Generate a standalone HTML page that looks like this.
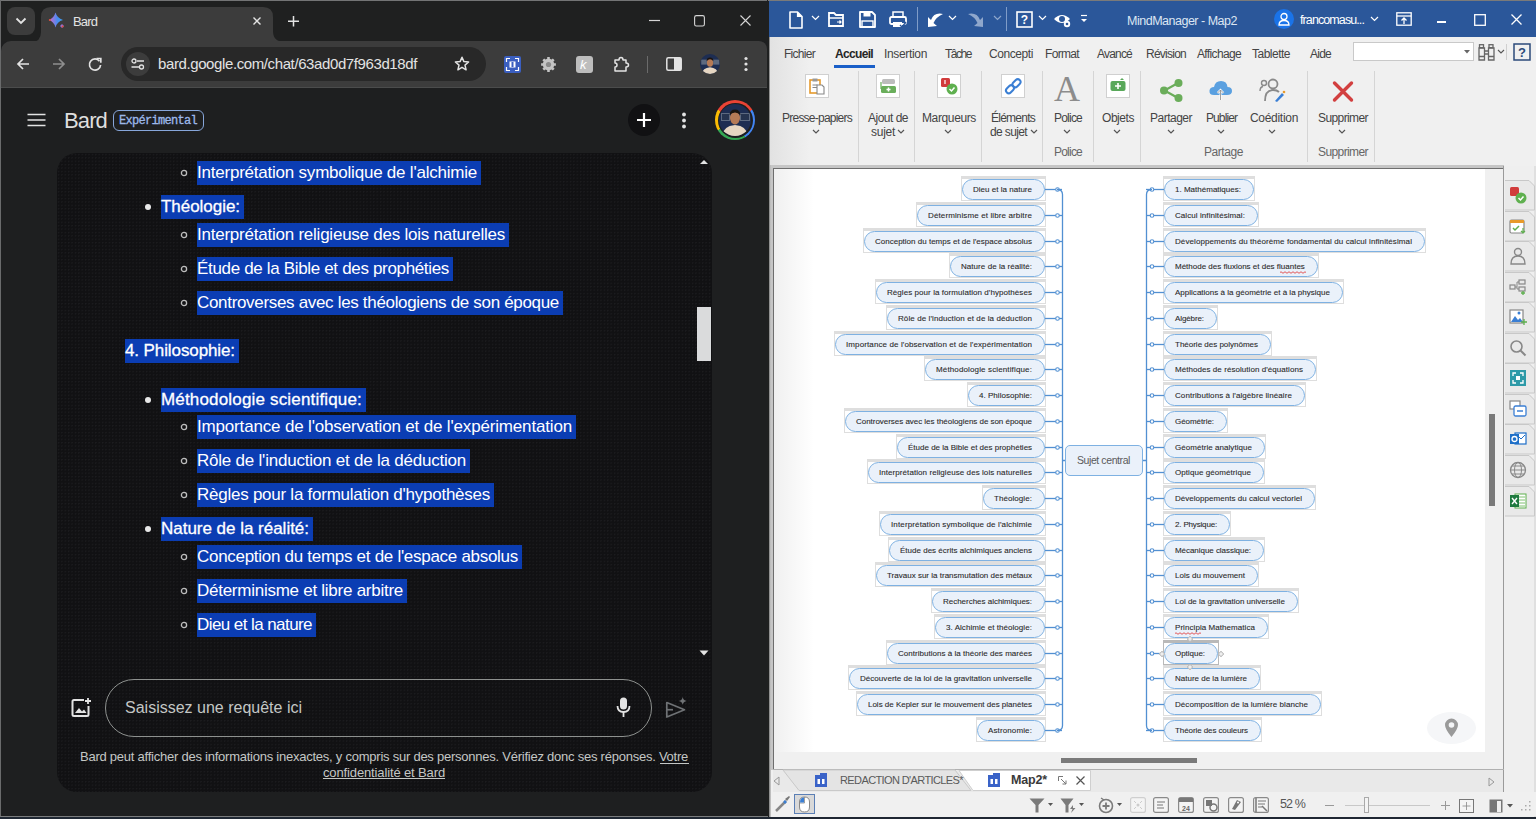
<!DOCTYPE html>
<html><head><meta charset="utf-8"><style>
html,body{margin:0;padding:0;width:1536px;height:819px;overflow:hidden;background:#1e1f20;font-family:"Liberation Sans", sans-serif;}
.t{position:absolute;white-space:pre;}
svg{overflow:visible}
</style></head><body>
<div style="position:absolute;left:0px;top:0px;width:769px;height:41px;background:#1f2020;"></div>
<div style="position:absolute;left:0px;top:88px;width:767px;height:728px;background:#1e1f20;"></div>
<div style="position:absolute;left:0px;top:0px;width:769px;height:1px;background:#737475;"></div>
<div style="position:absolute;left:0px;top:0px;width:1px;height:819px;background:#6a6b6c;"></div>
<div style="position:absolute;left:7px;top:7px;width:28px;height:28px;background:#3c3c3c;border-radius:8px;"></div>
<svg style="position:absolute;left:15px;top:17px" width="12" height="8" viewBox="0 0 12 8"><path d="M1.5 1.5 L6 6 L10.5 1.5" fill="none" stroke="#e3e3e3" stroke-width="1.8"/></svg>
<svg style="position:absolute;left:0;top:7px" width="290" height="35" viewBox="0 0 290 35"><path d="M31 35 Q41 35 41 25 L41 10 Q41 0 51 0 L263 0 Q273 0 273 10 L273 24 Q273 35 285 35 Z" fill="#3c3c3c"/></svg>
<div style="position:absolute;left:1px;top:41px;width:766px;height:46px;background:#3c3c3c;border-radius:10px 8px 0 0;"></div>
<div style="position:absolute;left:1px;top:87px;width:766px;height:1px;background:#4b4c4c;"></div>
<svg style="position:absolute;left:48px;top:11px" width="20" height="20" viewBox="0 0 20 20"><defs><linearGradient id="bg1" x1="0" y1="0" x2="1" y2="0"><stop offset="0.2" stop-color="#a873d6"/><stop offset="0.6" stop-color="#4a8cf0"/><stop offset="1" stop-color="#3ba0f0"/></linearGradient></defs><path d="M7.5 1.5 Q9 7 15 9 Q9 10.5 7.5 16.5 Q6 10.5 0.8 9 Q6 7 7.5 1.5Z" fill="url(#bg1)"/><path d="M14 13 L16 15 L14 17 L12 15Z" fill="#9a70d8"/><circle cx="14.6" cy="15.6" r="1" fill="#e0503a"/><circle cx="1.8" cy="9" r="1" fill="#e0503a"/></svg>
<div class="t " style="left:73px;top:14px;font-size:13px;line-height:16px;color:#e3e3e3;letter-spacing:-0.867px;">Bard</div>
<svg style="position:absolute;left:252px;top:16px" width="10" height="10" viewBox="0 0 10 10"><path d="M1.5 1.5 L8.5 8.5 M8.5 1.5 L1.5 8.5" stroke="#e3e3e3" stroke-width="1.4"/></svg>
<svg style="position:absolute;left:288px;top:16px" width="11" height="11" viewBox="0 0 11 11"><path d="M5.5 0 V10.5 M0 5.25 H11" stroke="#e3e3e3" stroke-width="1.5"/></svg>
<svg style="position:absolute;left:649px;top:20px" width="11" height="2" viewBox="0 0 11 2"><path d="M0 0.5 H11" stroke="#d6d6d6" stroke-width="1.2"/></svg>
<svg style="position:absolute;left:694px;top:15px" width="11" height="11" viewBox="0 0 11 11"><rect x="0.6" y="0.6" width="9.8" height="10.4" rx="1.8" fill="none" stroke="#d6d6d6" stroke-width="1.1"/></svg>
<svg style="position:absolute;left:739.5px;top:15px" width="11" height="11" viewBox="0 0 11 11"><path d="M0.5 0.5 L10.5 10.5 M10.5 0.5 L0.5 10.5" stroke="#d6d6d6" stroke-width="1.1"/></svg>
<svg style="position:absolute;left:16px;top:57px" width="14" height="14" viewBox="0 0 14 14"><path d="M13 7 H2 M7 2 L2 7 L7 12" fill="none" stroke="#e3e3e3" stroke-width="1.7"/></svg>
<svg style="position:absolute;left:52px;top:57px" width="14" height="14" viewBox="0 0 14 14"><path d="M1 7 H12 M7 2 L12 7 L7 12" fill="none" stroke="#8e8e8e" stroke-width="1.7"/></svg>
<svg style="position:absolute;left:88px;top:57px" width="14" height="14" viewBox="0 0 14 14"><path d="M11.5 4.2 A5.6 5.6 0 1 0 12.6 8" fill="none" stroke="#e3e3e3" stroke-width="1.7"/><path d="M8.5 1.5 H12.8 V5.8" fill="none" stroke="#e3e3e3" stroke-width="1.7"/></svg>
<div style="position:absolute;left:121px;top:47px;width:365px;height:34px;background:#282828;border-radius:17px;"></div>
<div style="position:absolute;left:126px;top:52px;width:24px;height:24px;background:#3c3c3c;border-radius:12px;"></div>
<svg style="position:absolute;left:131px;top:58px" width="14" height="12" viewBox="0 0 14 12"><circle cx="3" cy="3" r="2" fill="none" stroke="#e3e3e3" stroke-width="1.3"/><path d="M6 3 H13" stroke="#e3e3e3" stroke-width="1.5"/><circle cx="10.5" cy="9" r="2" fill="none" stroke="#e3e3e3" stroke-width="1.3"/><path d="M0.5 9 H8" stroke="#e3e3e3" stroke-width="1.5"/></svg>
<div class="t " style="left:158px;top:55px;font-size:15px;line-height:18px;color:#e3e3e3;letter-spacing:-0.394px;">bard.google.com/chat/63ad0d7f963d18df</div>
<svg style="position:absolute;left:454px;top:56px" width="16" height="16" viewBox="0 0 16 16"><path d="M8 1.2 L9.9 5.6 L14.6 6 L11 9.1 L12.1 13.8 L8 11.3 L3.9 13.8 L5 9.1 L1.4 6 L6.1 5.6 Z" fill="none" stroke="#e3e3e3" stroke-width="1.5" stroke-linejoin="round"/></svg>
<div style="position:absolute;left:504px;top:56px;width:17px;height:17px;background:#3b5fc0;border-radius:2px;"></div>
<svg style="position:absolute;left:504px;top:56px" width="17" height="17" viewBox="0 0 17 17"><path d="M2.5 6 V2.5 H6 M11 2.5 H14.5 V6 M14.5 11 V14.5 H11 M6 14.5 H2.5 V11" fill="none" stroke="#fff" stroke-width="1.2"/><rect x="5.5" y="5.5" width="6" height="6" fill="#fff"/><rect x="7.5" y="6" width="2" height="5" fill="#3b5fc0"/></svg>
<svg style="position:absolute;left:540px;top:56px" width="17" height="17" viewBox="0 0 17 17"><path d="M15.89,7.23 L15.89,9.77 L14.16,9.78 L13.41,11.59 L14.62,12.83 L12.83,14.62 L11.59,13.41 L9.78,14.16 L9.77,15.89 L7.23,15.89 L7.22,14.16 L5.41,13.41 L4.17,14.62 L2.38,12.83 L3.59,11.59 L2.84,9.78 L1.11,9.77 L1.11,7.23 L2.84,7.22 L3.59,5.41 L2.38,4.17 L4.17,2.38 L5.41,3.59 L7.22,2.84 L7.23,1.11 L9.77,1.11 L9.78,2.84 L11.59,3.59 L12.83,2.38 L14.62,4.17 L13.41,5.41 L14.16,7.22Z" fill="#c4c4c4"/><circle cx="8.5" cy="8.5" r="2.6" fill="#8a8a8a"/></svg>
<div style="position:absolute;left:576px;top:56px;width:17px;height:17px;background:#bdbdbd;border-radius:3px;"></div>
<div class="t " style="left:580px;top:56px;font-size:13px;line-height:17px;color:#ffffff;font-style:italic;">k</div>
<svg style="position:absolute;left:613px;top:56px" width="18" height="17" viewBox="0 0 18 17"><path d="M2 4 H6 Q6 1.5 8 1.5 Q10 1.5 10 4 H13 V7 Q15.5 7 15.5 9 Q15.5 11 13 11 V15 H2 V11 Q4 11 4 9 Q4 7 2 7 Z" fill="none" stroke="#e3e3e3" stroke-width="1.5" stroke-linejoin="round"/></svg>
<div style="position:absolute;left:647px;top:56px;width:1px;height:17px;background:#6b6b6b;"></div>
<svg style="position:absolute;left:666px;top:57px" width="16" height="14" viewBox="0 0 16 14"><rect x="0.8" y="0.8" width="14.4" height="12.4" rx="1.5" fill="none" stroke="#e3e3e3" stroke-width="1.5"/><rect x="8" y="0.8" width="7.2" height="12.4" fill="#e3e3e3"/></svg>
<svg style="position:absolute;left:700px;top:54px" width="20" height="20" viewBox="0 0 32 32"><defs><clipPath id="av2"><circle cx="16" cy="16" r="16"/></clipPath></defs><g clip-path="url(#av2)"><rect width="32" height="32" fill="#1d2d52"/><rect x="2" y="9" width="9" height="8" fill="#5d6a80"/><rect x="21" y="9" width="10" height="8" fill="#5d6a80"/><path d="M3 32 Q4 22 16 21 Q28 22 29 32Z" fill="#e6d6c2"/><ellipse cx="16" cy="14" rx="5" ry="6.5" fill="#b57a56"/><path d="M10.5 11 Q11 5.5 16 5.5 Q21 5.5 21.5 11 Q19 8.5 16 8.5 Q13 8.5 10.5 11Z" fill="#1a1410"/></g></svg>
<svg style="position:absolute;left:743px;top:56px" width="6" height="16" viewBox="0 0 6 16"><circle cx="3" cy="2.5" r="1.6" fill="#e3e3e3"/><circle cx="3" cy="8" r="1.6" fill="#e3e3e3"/><circle cx="3" cy="13.5" r="1.6" fill="#e3e3e3"/></svg>
<div style="position:absolute;left:767px;top:0px;width:2px;height:817px;background:#1f2020;"></div>
<svg style="position:absolute;left:27px;top:113px" width="19" height="14" viewBox="0 0 19 14"><path d="M0.5 1.5 H18.5 M0.5 7 H18.5 M0.5 12.5 H18.5" stroke="#e3e3e3" stroke-width="1.7"/></svg>
<div class="t " style="left:64px;top:107px;font-size:22px;line-height:28px;color:#dedede;letter-spacing:-0.871px;">Bard</div>
<div style="position:absolute;left:113px;top:110px;width:89px;height:19px;border:1px solid #87a6da;border-radius:6px;"></div>
<div class="t" style="left:113px;top:112px;width:90px;text-align:center;font-family:'Liberation Mono',monospace;font-size:12px;line-height:18px;color:#9cb8ea;letter-spacing:-0.7px;-webkit-text-stroke:0.3px #9cb8ea">Expérimental</div>
<div style="position:absolute;left:628px;top:104px;width:32px;height:32px;background:#111113;border-radius:50%;"></div>
<svg style="position:absolute;left:636px;top:112px" width="16" height="16" viewBox="0 0 16 16"><path d="M8 1 V15 M1 8 H15" stroke="#fff" stroke-width="2.2"/></svg>
<svg style="position:absolute;left:681px;top:112px" width="6" height="17" viewBox="0 0 6 17"><circle cx="3" cy="2.5" r="1.9" fill="#e3e3e3"/><circle cx="3" cy="8.5" r="1.9" fill="#e3e3e3"/><circle cx="3" cy="14.5" r="1.9" fill="#e3e3e3"/></svg>
<div style="position:absolute;left:715px;top:100px;width:40px;height:40px;border-radius:50%;background:conic-gradient(from -60deg, #ea4335 0 120deg, #4285f4 120deg 210deg, #34a853 210deg 300deg, #fbbc04 300deg 360deg);"></div>
<div style="position:absolute;left:717.5px;top:102.5px;width:35px;height:35px;background:#1e1f20;border-radius:50%;"></div>
<svg style="position:absolute;left:719px;top:104px" width="32" height="32" viewBox="0 0 32 32"><defs><clipPath id="av"><circle cx="16" cy="16" r="16"/></clipPath></defs><g clip-path="url(#av)"><rect width="32" height="32" fill="#1d2d52"/><rect x="2" y="9" width="9" height="8" fill="#5d6a80"/><rect x="21" y="9" width="10" height="8" fill="#5d6a80"/><rect x="3" y="10" width="7" height="6" fill="#26344f"/><rect x="22" y="10" width="8" height="6" fill="#26344f"/><path d="M3 32 Q4 22 16 21 Q28 22 29 32Z" fill="#e6d6c2"/><ellipse cx="16" cy="14" rx="5" ry="6.5" fill="#b57a56"/><path d="M10.5 11 Q11 5.5 16 5.5 Q21 5.5 21.5 11 Q19 8.5 16 8.5 Q13 8.5 10.5 11Z" fill="#1a1410"/></g></svg>
<div style="position:absolute;left:57px;top:153px;width:655px;height:639px;background-color:#111113;background-image:radial-gradient(circle at 1.5px 1.5px, #1c1c1f 0.6px, transparent 0.9px);background-size:3.4px 3.4px;border-radius:20px;"></div>
<div style="position:absolute;left:697px;top:307px;width:14px;height:54px;background:#dadbdc;"></div>
<svg style="position:absolute;left:699px;top:159px" width="10" height="6" viewBox="0 0 10 6"><path d="M1 5 L5 1 L9 5Z" fill="#e3e3e3"/></svg>
<svg style="position:absolute;left:699px;top:650px" width="10" height="6" viewBox="0 0 10 6"><path d="M0.5 0.5 L5 5.5 L9.5 0.5Z" fill="#e3e3e3"/></svg>
<div style="position:absolute;left:197px;top:161px;width:284px;height:24px;background:#0b3db3;"></div>
<div class="t " style="left:197px;top:161px;font-size:17px;line-height:24px;color:#ffffff;letter-spacing:-0.221px;">Interprétation symbolique de l'alchimie</div>
<svg style="position:absolute;left:180px;top:169px" width="8" height="8" viewBox="0 0 8 8"><circle cx="4" cy="4" r="2.6" fill="none" stroke="#bdbdbd" stroke-width="1.3"/></svg>
<div style="position:absolute;left:161px;top:195px;width:83px;height:24px;background:#0b3db3;"></div>
<div class="t " style="left:161px;top:195px;font-size:17px;line-height:24px;color:#ffffff;-webkit-text-stroke:0.3px currentColor;letter-spacing:-0.039px;">Théologie:</div>
<svg style="position:absolute;left:144px;top:203px" width="8" height="8" viewBox="0 0 8 8"><circle cx="4" cy="4" r="3" fill="#e8e8e8"/></svg>
<div style="position:absolute;left:197px;top:223px;width:312px;height:24px;background:#0b3db3;"></div>
<div class="t " style="left:197px;top:223px;font-size:17px;line-height:24px;color:#ffffff;letter-spacing:-0.233px;">Interprétation religieuse des lois naturelles</div>
<svg style="position:absolute;left:180px;top:231px" width="8" height="8" viewBox="0 0 8 8"><circle cx="4" cy="4" r="2.6" fill="none" stroke="#bdbdbd" stroke-width="1.3"/></svg>
<div style="position:absolute;left:197px;top:257px;width:256px;height:24px;background:#0b3db3;"></div>
<div class="t " style="left:197px;top:257px;font-size:17px;line-height:24px;color:#ffffff;letter-spacing:-0.334px;">Étude de la Bible et des prophéties</div>
<svg style="position:absolute;left:180px;top:265px" width="8" height="8" viewBox="0 0 8 8"><circle cx="4" cy="4" r="2.6" fill="none" stroke="#bdbdbd" stroke-width="1.3"/></svg>
<div style="position:absolute;left:197px;top:291px;width:366px;height:24px;background:#0b3db3;"></div>
<div class="t " style="left:197px;top:291px;font-size:17px;line-height:24px;color:#ffffff;letter-spacing:-0.321px;">Controverses avec les théologiens de son époque</div>
<svg style="position:absolute;left:180px;top:299px" width="8" height="8" viewBox="0 0 8 8"><circle cx="4" cy="4" r="2.6" fill="none" stroke="#bdbdbd" stroke-width="1.3"/></svg>
<div style="position:absolute;left:125px;top:339px;width:114px;height:24px;background:#0b3db3;"></div>
<div class="t " style="left:125px;top:339px;font-size:17px;line-height:24px;color:#ffffff;-webkit-text-stroke:0.3px currentColor;letter-spacing:-0.102px;">4. Philosophie:</div>
<div style="position:absolute;left:161px;top:388px;width:205px;height:24px;background:#0b3db3;"></div>
<div class="t " style="left:161px;top:388px;font-size:17px;line-height:24px;color:#ffffff;-webkit-text-stroke:0.3px currentColor;letter-spacing:0.170px;">Méthodologie scientifique:</div>
<svg style="position:absolute;left:144px;top:396px" width="8" height="8" viewBox="0 0 8 8"><circle cx="4" cy="4" r="3" fill="#e8e8e8"/></svg>
<div style="position:absolute;left:197px;top:415px;width:379px;height:24px;background:#0b3db3;"></div>
<div class="t " style="left:197px;top:415px;font-size:17px;line-height:24px;color:#ffffff;letter-spacing:-0.168px;">Importance de l'observation et de l'expérimentation</div>
<svg style="position:absolute;left:180px;top:423px" width="8" height="8" viewBox="0 0 8 8"><circle cx="4" cy="4" r="2.6" fill="none" stroke="#bdbdbd" stroke-width="1.3"/></svg>
<div style="position:absolute;left:197px;top:449px;width:273px;height:24px;background:#0b3db3;"></div>
<div class="t " style="left:197px;top:449px;font-size:17px;line-height:24px;color:#ffffff;letter-spacing:-0.220px;">Rôle de l'induction et de la déduction</div>
<svg style="position:absolute;left:180px;top:457px" width="8" height="8" viewBox="0 0 8 8"><circle cx="4" cy="4" r="2.6" fill="none" stroke="#bdbdbd" stroke-width="1.3"/></svg>
<div style="position:absolute;left:197px;top:483px;width:297px;height:24px;background:#0b3db3;"></div>
<div class="t " style="left:197px;top:483px;font-size:17px;line-height:24px;color:#ffffff;letter-spacing:-0.252px;">Règles pour la formulation d'hypothèses</div>
<svg style="position:absolute;left:180px;top:491px" width="8" height="8" viewBox="0 0 8 8"><circle cx="4" cy="4" r="2.6" fill="none" stroke="#bdbdbd" stroke-width="1.3"/></svg>
<div style="position:absolute;left:161px;top:517px;width:152px;height:24px;background:#0b3db3;"></div>
<div class="t " style="left:161px;top:517px;font-size:17px;line-height:24px;color:#ffffff;-webkit-text-stroke:0.3px currentColor;letter-spacing:-0.018px;">Nature de la réalité:</div>
<svg style="position:absolute;left:144px;top:525px" width="8" height="8" viewBox="0 0 8 8"><circle cx="4" cy="4" r="3" fill="#e8e8e8"/></svg>
<div style="position:absolute;left:197px;top:545px;width:325px;height:24px;background:#0b3db3;"></div>
<div class="t " style="left:197px;top:545px;font-size:17px;line-height:24px;color:#ffffff;letter-spacing:-0.288px;">Conception du temps et de l'espace absolus</div>
<svg style="position:absolute;left:180px;top:553px" width="8" height="8" viewBox="0 0 8 8"><circle cx="4" cy="4" r="2.6" fill="none" stroke="#bdbdbd" stroke-width="1.3"/></svg>
<div style="position:absolute;left:197px;top:579px;width:210px;height:24px;background:#0b3db3;"></div>
<div class="t " style="left:197px;top:579px;font-size:17px;line-height:24px;color:#ffffff;letter-spacing:-0.259px;">Déterminisme et libre arbitre</div>
<svg style="position:absolute;left:180px;top:587px" width="8" height="8" viewBox="0 0 8 8"><circle cx="4" cy="4" r="2.6" fill="none" stroke="#bdbdbd" stroke-width="1.3"/></svg>
<div style="position:absolute;left:197px;top:613px;width:119px;height:24px;background:#0b3db3;"></div>
<div class="t " style="left:197px;top:613px;font-size:17px;line-height:24px;color:#ffffff;letter-spacing:-0.574px;">Dieu et la nature</div>
<svg style="position:absolute;left:180px;top:621px" width="8" height="8" viewBox="0 0 8 8"><circle cx="4" cy="4" r="2.6" fill="none" stroke="#bdbdbd" stroke-width="1.3"/></svg>
<div style="position:absolute;left:105px;top:679px;width:545px;height:56px;border:1px solid #8e918f;border-radius:29px;"></div>
<div class="t " style="left:125px;top:698px;font-size:16px;line-height:20px;color:#c4c7c5;">Saisissez une requête ici</div>
<svg style="position:absolute;left:71px;top:698px" width="21" height="20" viewBox="0 0 21 20"><path d="M13 2 H3 Q1.5 2 1.5 3.5 V16.5 Q1.5 18 3 18 H16 Q17.5 18 17.5 16.5 V8" fill="none" stroke="#e3e3e3" stroke-width="2"/><path d="M4 15 L8 10 L11 13.5 L13 11.5 L15.5 15Z" fill="#e3e3e3"/><path d="M17 0 V6 M14 3 H20" stroke="#e3e3e3" stroke-width="1.8"/></svg>
<svg style="position:absolute;left:616px;top:697px" width="15" height="21" viewBox="0 0 15 21"><rect x="4" y="0.5" width="7" height="12" rx="3.5" fill="#e3e3e3"/><path d="M1.5 9 Q1.5 15 7.5 15 Q13.5 15 13.5 9" fill="none" stroke="#e3e3e3" stroke-width="1.8"/><path d="M7.5 15 V20" stroke="#e3e3e3" stroke-width="1.8"/></svg>
<svg style="position:absolute;left:665px;top:697px" width="23" height="22" viewBox="0 0 23 22"><path d="M1.8 5.5 L19.5 12.7 L1.8 20 Z" fill="none" stroke="#6f7275" stroke-width="1.7" stroke-linejoin="round"/><path d="M1.8 12.7 H8" stroke="#6f7275" stroke-width="1.7"/><path d="M17.7 0 Q18.2 3.4 21.6 3.9 Q18.2 4.4 17.7 7.8 Q17.2 4.4 13.8 3.9 Q17.2 3.4 17.7 0Z" fill="#6f7275"/></svg>
<div class="t " style="left:80px;top:749px;font-size:13px;line-height:16px;color:#c4c7c5;letter-spacing:-0.240px;">Bard peut afficher des informations inexactes, y compris sur des personnes. Vérifiez donc ses réponses. Votre</div>
<div style="position:absolute;left:660px;top:763px;width:29px;height:1px;background:#c4c7c5;"></div>
<div class="t " style="left:323px;top:765px;font-size:13px;line-height:16px;color:#c4c7c5;letter-spacing:-0.132px;text-decoration:underline;">confidentialité et Bard</div>
<div style="position:absolute;left:0px;top:816px;width:768px;height:1px;background:#7b7c7d;"></div>
<div style="position:absolute;left:0px;top:817px;width:1536px;height:2px;background:#1f2733;"></div>
<div style="position:absolute;left:769px;top:0px;width:767px;height:817px;background:#f0f0f0;"></div>
<div style="position:absolute;left:768px;top:0px;width:768px;height:1px;background:#7a7a7a;"></div>
<div style="position:absolute;left:769px;top:1px;width:767px;height:36px;background:#2b579a;"></div>
<div style="position:absolute;left:769px;top:37px;width:2px;height:780px;background:linear-gradient(90deg,#7a7a7a,#d4d4d4);"></div>
<div style="position:absolute;left:770px;top:37px;width:40px;height:128px;background:linear-gradient(90deg,#e2e2e2,#f0f0f0);"></div>
<svg style="position:absolute;left:789px;top:11px" width="14" height="18" viewBox="0 0 14 18"><path d="M1 1 H8.5 L13 5.5 V17 H1 Z" fill="none" stroke="#fff" stroke-width="1.6" stroke-linejoin="round"/><path d="M8.5 1 V5.5 H13" fill="#fff" stroke="#fff" stroke-width="1.2"/></svg>
<svg style="position:absolute;left:811px;top:15px" width="9" height="6" viewBox="0 0 9 6"><path d="M1 1 L4.5 4.5 L8 1" fill="none" stroke="#fff" stroke-width="1.2"/></svg>
<svg style="position:absolute;left:828px;top:11px" width="17" height="16" viewBox="0 0 17 16"><path d="M1 2 H6 L8 4 H15 V15 H1 Z" fill="none" stroke="#fff" stroke-width="1.8"/><path d="M1 7 H15" stroke="#fff" stroke-width="1.5"/><path d="M9 11 H13 M11.5 9.5 L13 11 L11.5 12.5" stroke="#fff" stroke-width="1.2" fill="none"/></svg>
<svg style="position:absolute;left:859px;top:11px" width="17" height="17" viewBox="0 0 17 17"><path d="M1 1 H13 L16 4 V16 H1 Z" fill="none" stroke="#fff" stroke-width="1.8" stroke-linejoin="round"/><rect x="4.5" y="1" width="7" height="4.5" fill="#fff"/><rect x="3" y="10" width="11" height="6" fill="none" stroke="#fff" stroke-width="1.4"/></svg>
<svg style="position:absolute;left:889px;top:11px" width="18" height="17" viewBox="0 0 18 17"><rect x="4" y="1" width="10" height="5" fill="none" stroke="#fff" stroke-width="1.5"/><rect x="1" y="6" width="16" height="7" rx="1.5" fill="none" stroke="#fff" stroke-width="1.8"/><rect x="4" y="11" width="9" height="5" fill="#fff"/><path d="M11 14 L13 16 L17 11" stroke="#2b579a" stroke-width="1.4" fill="none"/></svg>
<div style="position:absolute;left:917px;top:7px;width:1px;height:24px;background:#7f9cc8;"></div>
<svg style="position:absolute;left:926px;top:11px" width="18" height="17" viewBox="0 0 18 17"><path d="M17 3 Q8 1 5 9 L2 6 L2 16 L11 15 L7.5 12 Q10 6 17 3Z" fill="#fff"/></svg>
<svg style="position:absolute;left:948px;top:15px" width="9" height="6" viewBox="0 0 9 6"><path d="M1 1 L4.5 4.5 L8 1" fill="none" stroke="#fff" stroke-width="1.2"/></svg>
<svg style="position:absolute;left:967px;top:11px" width="18" height="17" viewBox="0 0 18 17"><path d="M1 3 Q10 1 13 9 L16 6 L16 16 L7 15 L10.5 12 Q8 6 1 3Z" fill="#8fa7cc"/></svg>
<svg style="position:absolute;left:993px;top:15px" width="9" height="6" viewBox="0 0 9 6"><path d="M1 1 L4.5 4.5 L8 1" fill="none" stroke="#8fa7cc" stroke-width="1.2"/></svg>
<div style="position:absolute;left:1006px;top:7px;width:1px;height:24px;background:#7f9cc8;"></div>
<svg style="position:absolute;left:1016px;top:11px" width="17" height="17" viewBox="0 0 17 17"><rect x="1" y="1" width="15" height="15" fill="none" stroke="#fff" stroke-width="1.6"/><text x="8.5" y="13" text-anchor="middle" font-family="Liberation Sans" font-weight="bold" font-size="12" fill="#fff">?</text></svg>
<svg style="position:absolute;left:1038px;top:15px" width="9" height="6" viewBox="0 0 9 6"><path d="M1 1 L4.5 4.5 L8 1" fill="none" stroke="#fff" stroke-width="1.2"/></svg>
<svg style="position:absolute;left:1053px;top:12px" width="19" height="16" viewBox="0 0 19 16"><path d="M1 7 Q9 -1 17 7 Q9 15 1 7Z" fill="#fff"/><circle cx="9" cy="7" r="3" fill="#2b579a"/><circle cx="14" cy="12" r="3.2" fill="#fff"/><circle cx="14" cy="12" r="1.3" fill="#2b579a"/></svg>
<svg style="position:absolute;left:1080px;top:14px" width="8" height="10" viewBox="0 0 8 10"><path d="M1 1.5 H7" stroke="#fff" stroke-width="1.2"/><path d="M1 5 L4 8 L7 5Z" fill="#fff"/></svg>
<div class="t " style="left:1127px;top:13px;font-size:12.5px;line-height:16px;color:#dde6f2;letter-spacing:-0.490px;">MindManager - Map2</div>
<div style="position:absolute;left:1274px;top:9px;width:20px;height:20px;background:#1a73e8;border-radius:50%;"></div>
<svg style="position:absolute;left:1278px;top:12px" width="12" height="14" viewBox="0 0 12 14"><circle cx="6" cy="4.5" r="3" fill="none" stroke="#fff" stroke-width="1.3"/><path d="M1 13 Q1 8.5 6 8.5 Q11 8.5 11 13 Z" fill="none" stroke="#fff" stroke-width="1.3"/></svg>
<div class="t " style="left:1300px;top:12px;font-size:12.5px;line-height:16px;color:#ffffff;letter-spacing:-0.903px;">francomasu...</div>
<svg style="position:absolute;left:1370px;top:16px" width="9" height="6" viewBox="0 0 9 6"><path d="M1 1 L4.5 4.5 L8 1" fill="none" stroke="#fff" stroke-width="1.2"/></svg>
<svg style="position:absolute;left:1396px;top:12px" width="16" height="14" viewBox="0 0 16 14"><rect x="0.8" y="0.8" width="14.4" height="12.4" fill="none" stroke="#fff" stroke-width="1.3"/><path d="M0.8 4 H15.2" stroke="#fff" stroke-width="1.3"/><path d="M8 12 V6 M5.5 8.5 L8 6 L10.5 8.5" stroke="#fff" stroke-width="1.3" fill="none"/></svg>
<div style="position:absolute;left:1437px;top:21px;width:9px;height:2px;background:#fff;"></div>
<svg style="position:absolute;left:1474px;top:14px" width="12" height="12" viewBox="0 0 12 12"><rect x="0.7" y="0.7" width="10.6" height="10.6" fill="none" stroke="#fff" stroke-width="1.3"/></svg>
<svg style="position:absolute;left:1511px;top:14px" width="11" height="11" viewBox="0 0 11 11"><path d="M0.5 0.5 L10.5 10.5 M10.5 0.5 L0.5 10.5" stroke="#fff" stroke-width="1.3"/></svg>
<div class="t " style="left:784px;top:47px;font-size:12px;line-height:15px;color:#444444;letter-spacing:-0.717px;">Fichier</div>
<div class="t " style="left:835px;top:47px;font-size:12px;line-height:15px;color:#262626;font-weight:bold;letter-spacing:-0.670px;">Accueil</div>
<div class="t " style="left:884px;top:47px;font-size:12px;line-height:15px;color:#444444;letter-spacing:-0.337px;">Insertion</div>
<div class="t " style="left:945px;top:47px;font-size:12px;line-height:15px;color:#444444;letter-spacing:-1.472px;">Tâche</div>
<div class="t " style="left:989px;top:47px;font-size:12px;line-height:15px;color:#444444;letter-spacing:-0.422px;">Concepti</div>
<div class="t " style="left:1045px;top:47px;font-size:12px;line-height:15px;color:#444444;letter-spacing:-0.669px;">Format</div>
<div class="t " style="left:1097px;top:47px;font-size:12px;line-height:15px;color:#444444;letter-spacing:-0.802px;">Avancé</div>
<div class="t " style="left:1146px;top:47px;font-size:12px;line-height:15px;color:#444444;letter-spacing:-0.754px;">Révision</div>
<div class="t " style="left:1197px;top:47px;font-size:12px;line-height:15px;color:#444444;letter-spacing:-0.648px;">Affichage</div>
<div class="t " style="left:1252px;top:47px;font-size:12px;line-height:15px;color:#444444;letter-spacing:-0.504px;">Tablette</div>
<div class="t " style="left:1310px;top:47px;font-size:12px;line-height:15px;color:#444444;letter-spacing:-0.758px;">Aide</div>
<div style="position:absolute;left:834px;top:65px;width:41px;height:3px;background:#1a5fc8;"></div>
<div style="position:absolute;left:1353px;top:42px;width:121px;height:19px;background:#fff;border:1px solid #c9c9c9;box-sizing:border-box;"></div>
<svg style="position:absolute;left:1464px;top:50px" width="6" height="4" viewBox="0 0 6 4"><path d="M0 0 H6 L3 3.5Z" fill="#666"/></svg>
<svg style="position:absolute;left:1478px;top:44px" width="18" height="17" viewBox="0 0 18 17"><g fill="none" stroke="#666" stroke-width="1.3"><rect x="1.5" y="0.7" width="4" height="3"/><rect x="11" y="0.7" width="4" height="3"/><path d="M1 4 H6.5 V16 H1Z M10.5 4 H16 V16 H10.5Z"/><path d="M6.5 7 H10.5 M6.5 10 H10.5"/><path d="M1 12.5 H6.5 M10.5 12.5 H16"/></g></svg>
<svg style="position:absolute;left:1497px;top:49px" width="8" height="5" viewBox="0 0 8 5"><path d="M1 1 L4 4 L7 1" fill="none" stroke="#555" stroke-width="1.1"/></svg>
<div style="position:absolute;left:1506px;top:44px;width:1px;height:16px;background:#cfcfcf;"></div>
<svg style="position:absolute;left:1513px;top:43px" width="18" height="18" viewBox="0 0 18 18"><rect x="1" y="1" width="16" height="16" fill="none" stroke="#2b4a7a" stroke-width="1.5"/><text x="9" y="14" text-anchor="middle" font-family="Liberation Sans" font-weight="bold" font-size="13" fill="#2b4a7a">?</text></svg>
<div style="position:absolute;left:858px;top:71px;width:1px;height:91px;background:#d5d5d5;"></div>
<div style="position:absolute;left:914px;top:71px;width:1px;height:91px;background:#d5d5d5;"></div>
<div style="position:absolute;left:981px;top:71px;width:1px;height:91px;background:#d5d5d5;"></div>
<div style="position:absolute;left:1042px;top:71px;width:1px;height:91px;background:#d5d5d5;"></div>
<div style="position:absolute;left:1093px;top:71px;width:1px;height:91px;background:#d5d5d5;"></div>
<div style="position:absolute;left:1140px;top:71px;width:1px;height:91px;background:#d5d5d5;"></div>
<div style="position:absolute;left:1307px;top:71px;width:1px;height:91px;background:#d5d5d5;"></div>
<div style="position:absolute;left:1374px;top:71px;width:1px;height:91px;background:#d5d5d5;"></div>
<div style="position:absolute;left:805px;top:74px;width:24px;height:24px;background:#fff;border:1px solid #d0d0d0;box-sizing:border-box;"></div>
<div style="position:absolute;left:876px;top:74px;width:24px;height:24px;background:#fff;border:1px solid #d0d0d0;box-sizing:border-box;"></div>
<div style="position:absolute;left:937px;top:74px;width:24px;height:24px;background:#fff;border:1px solid #d0d0d0;box-sizing:border-box;"></div>
<div style="position:absolute;left:1001px;top:74px;width:24px;height:24px;background:#fff;border:1px solid #d0d0d0;box-sizing:border-box;"></div>
<div style="position:absolute;left:1106px;top:74px;width:24px;height:24px;background:#fff;border:1px solid #d0d0d0;box-sizing:border-box;"></div>
<svg style="position:absolute;left:808px;top:77px" width="18" height="18" viewBox="0 0 18 18"><rect x="2" y="3" width="10" height="13" fill="none" stroke="#e59a2c" stroke-width="1.6"/><rect x="4.5" y="1.5" width="5" height="3" fill="#999"/><path d="M4.5 8 H9.5 M4.5 10.5 H9.5" stroke="#888" stroke-width="1"/><path d="M9 8 H14 L16 10 V17 H9Z" fill="#fff" stroke="#888" stroke-width="1.1"/></svg>
<svg style="position:absolute;left:879px;top:77px" width="18" height="18" viewBox="0 0 18 18"><rect x="3" y="2" width="13" height="5" rx="1.5" fill="#bdbdbd"/><rect x="2" y="9" width="15" height="7" rx="1.5" fill="#6aae5b"/><path d="M9.5 10.5 V14.5 M7.5 12.5 H11.5" stroke="#fff" stroke-width="1.5"/><path d="M2 5 V12" stroke="#6aae5b" stroke-width="1.2"/></svg>
<svg style="position:absolute;left:940px;top:77px" width="18" height="18" viewBox="0 0 18 18"><rect x="1" y="1" width="9" height="9" rx="1.5" fill="#d13b3b"/><path d="M5 3 V7" stroke="#fff" stroke-width="1.2"/><circle cx="12" cy="12" r="5.5" fill="#5fb04f"/><path d="M9.5 12 L11.5 14 L14.5 10.5" stroke="#fff" stroke-width="1.5" fill="none"/></svg>
<svg style="position:absolute;left:1004px;top:77px" width="18" height="18" viewBox="0 0 18 18"><rect x="8" y="3.5" width="9" height="5.5" rx="2.75" transform="rotate(-45 12.5 6.25)" fill="none" stroke="#3b7fd4" stroke-width="2"/><rect x="1.5" y="9.5" width="9" height="5.5" rx="2.75" transform="rotate(-45 6 12.25)" fill="none" stroke="#3b7fd4" stroke-width="2"/></svg>
<div class="t" style="left:1054px;top:71px;font-family:'Liberation Serif',serif;font-size:36px;line-height:36px;color:#8c8c8c;">A</div>
<svg style="position:absolute;left:1109px;top:77px" width="18" height="18" viewBox="0 0 18 18"><rect x="1.5" y="4" width="15" height="10" rx="2" fill="#59a85a"/><path d="M9 6 V12 M6 9 H12" stroke="#fff" stroke-width="1.6"/><path d="M11 3 L15 3 L13 1Z" fill="#59a85a"/></svg>
<svg style="position:absolute;left:1159px;top:78px" width="25" height="25" viewBox="0 0 25 25"><path d="M19 5 L5.5 12.5 L19 20" stroke="#6aad5a" stroke-width="2.2" fill="none"/><circle cx="19.5" cy="5" r="4" fill="#6aad5a"/><circle cx="5" cy="12.5" r="4" fill="#6aad5a"/><circle cx="19.5" cy="20" r="4" fill="#6aad5a"/></svg>
<svg style="position:absolute;left:1208px;top:79px" width="25" height="22" viewBox="0 0 25 22"><path d="M6 16 Q1 16 1.5 11.5 Q2 8 6 8 Q7 2 13 2 Q19 2 19.5 8 Q24 8 24 12 Q24 16 19 16Z" fill="#5aa0e0"/><path d="M12.5 21 V11 M9.5 14 L12.5 11 L15.5 14" stroke="#fff" stroke-width="2" fill="none"/><path d="M12.5 21 V11 M9.5 14 L12.5 11 L15.5 14" stroke="#888" stroke-width="0.8" fill="none"/></svg>
<svg style="position:absolute;left:1258px;top:78px" width="28" height="25" viewBox="0 0 28 25"><circle cx="6" cy="5" r="2.5" fill="none" stroke="#8a8a8a" stroke-width="1.4"/><path d="M2 13 Q2 9 5 8.5" fill="none" stroke="#8a8a8a" stroke-width="1.4"/><circle cx="15" cy="6" r="4.5" fill="none" stroke="#8a8a8a" stroke-width="1.8"/><path d="M7 23 Q7 12 15 12 Q19 12 21 14" fill="none" stroke="#8a8a8a" stroke-width="1.8"/><path d="M17 23 L24 15 L26 17 L19 24 Z" fill="#3a7fd5"/><circle cx="26" cy="14" r="1.3" fill="#e89a2a"/></svg>
<svg style="position:absolute;left:1332px;top:81px" width="22" height="21" viewBox="0 0 22 21"><path d="M2.5 2 L19.5 19 M19.5 2 L2.5 19" stroke="#d23f3f" stroke-width="3.4" stroke-linecap="round"/></svg>
<div class="t " style="left:782px;top:111px;font-size:12px;line-height:15px;color:#444444;letter-spacing:-0.765px;">Presse-papiers</div>
<div class="t " style="left:922px;top:111px;font-size:12px;line-height:15px;color:#444444;letter-spacing:-0.373px;">Marqueurs</div>
<div class="t " style="left:1054px;top:111px;font-size:12px;line-height:15px;color:#444444;letter-spacing:-0.781px;">Police</div>
<div class="t " style="left:1102px;top:111px;font-size:12px;line-height:15px;color:#444444;letter-spacing:-0.448px;">Objets</div>
<div class="t " style="left:1150px;top:111px;font-size:12px;line-height:15px;color:#444444;letter-spacing:-0.504px;">Partager</div>
<div class="t " style="left:1206px;top:111px;font-size:12px;line-height:15px;color:#444444;letter-spacing:-0.908px;">Publier</div>
<div class="t " style="left:1250px;top:111px;font-size:12px;line-height:15px;color:#444444;letter-spacing:-0.300px;">Coédition</div>
<div class="t " style="left:1318px;top:111px;font-size:12px;line-height:15px;color:#444444;letter-spacing:-0.595px;">Supprimer</div>
<div class="t " style="left:868px;top:111px;font-size:12px;line-height:15px;color:#444444;letter-spacing:-0.506px;">Ajout de</div>
<div class="t " style="left:871px;top:125px;font-size:12px;line-height:15px;color:#444444;letter-spacing:-0.272px;">sujet</div>
<div class="t " style="left:991px;top:111px;font-size:12px;line-height:15px;color:#444444;letter-spacing:-0.754px;">Éléments</div>
<div class="t " style="left:990px;top:125px;font-size:12px;line-height:15px;color:#444444;letter-spacing:-0.629px;">de sujet</div>
<svg style="position:absolute;left:812px;top:129px" width="8" height="5" viewBox="0 0 8 5"><path d="M1 1 L4 4 L7 1" fill="none" stroke="#555" stroke-width="1.2"/></svg>
<svg style="position:absolute;left:944px;top:129px" width="8" height="5" viewBox="0 0 8 5"><path d="M1 1 L4 4 L7 1" fill="none" stroke="#555" stroke-width="1.2"/></svg>
<svg style="position:absolute;left:1063px;top:129px" width="8" height="5" viewBox="0 0 8 5"><path d="M1 1 L4 4 L7 1" fill="none" stroke="#555" stroke-width="1.2"/></svg>
<svg style="position:absolute;left:1113px;top:129px" width="8" height="5" viewBox="0 0 8 5"><path d="M1 1 L4 4 L7 1" fill="none" stroke="#555" stroke-width="1.2"/></svg>
<svg style="position:absolute;left:1167px;top:129px" width="8" height="5" viewBox="0 0 8 5"><path d="M1 1 L4 4 L7 1" fill="none" stroke="#555" stroke-width="1.2"/></svg>
<svg style="position:absolute;left:1217px;top:129px" width="8" height="5" viewBox="0 0 8 5"><path d="M1 1 L4 4 L7 1" fill="none" stroke="#555" stroke-width="1.2"/></svg>
<svg style="position:absolute;left:1268px;top:129px" width="8" height="5" viewBox="0 0 8 5"><path d="M1 1 L4 4 L7 1" fill="none" stroke="#555" stroke-width="1.2"/></svg>
<svg style="position:absolute;left:1338px;top:129px" width="8" height="5" viewBox="0 0 8 5"><path d="M1 1 L4 4 L7 1" fill="none" stroke="#555" stroke-width="1.2"/></svg>
<svg style="position:absolute;left:897px;top:129px" width="8" height="5" viewBox="0 0 8 5"><path d="M1 1 L4 4 L7 1" fill="none" stroke="#555" stroke-width="1.2"/></svg>
<svg style="position:absolute;left:1030px;top:129px" width="8" height="5" viewBox="0 0 8 5"><path d="M1 1 L4 4 L7 1" fill="none" stroke="#555" stroke-width="1.2"/></svg>
<div class="t " style="left:1054px;top:145px;font-size:12px;line-height:15px;color:#666666;letter-spacing:-0.781px;">Police</div>
<div class="t " style="left:1204px;top:145px;font-size:12px;line-height:15px;color:#666666;letter-spacing:-0.433px;">Partage</div>
<div class="t " style="left:1318px;top:145px;font-size:12px;line-height:15px;color:#666666;letter-spacing:-0.595px;">Supprimer</div>
<div style="position:absolute;left:771px;top:165px;width:733px;height:605px;background:#f0f0f0;border-top:3px solid #c6c6c6;border-left:2px solid #c6c6c6;box-sizing:border-box;"></div>
<div style="position:absolute;left:773px;top:168px;width:731px;height:1px;background:#6e6e6e;"></div>
<div style="position:absolute;left:773px;top:168px;width:1px;height:602px;background:#6e6e6e;"></div>
<div style="position:absolute;left:774px;top:169px;width:711px;height:583px;background:#ffffff;"></div>
<div style="position:absolute;left:774px;top:169px;width:40px;height:583px;background:linear-gradient(90deg,#f0f0f0,#ffffff);"></div>
<div style="position:absolute;left:1489px;top:414px;width:6px;height:92px;background:#7a7a7a;"></div>
<div style="position:absolute;left:1503px;top:166px;width:1px;height:627px;background:#9a9a9a;"></div>
<div style="position:absolute;left:773px;top:769px;width:731px;height:1px;background:#b0b0b0;"></div>
<div style="position:absolute;left:1061px;top:758px;width:136px;height:5px;background:#7a7a7a;"></div>
<div style="position:absolute;left:1504px;top:166px;width:32px;height:626px;background:#efefef;"></div>
<div style="position:absolute;left:1534px;top:166px;width:2px;height:651px;background:#e0e0e0;"></div>
<div style="position:absolute;left:961px;top:176px;width:85px;height:25px;border:1px solid #dedede;border-top-width:3px;box-sizing:border-box;background:#fff;"></div>
<div style="position:absolute;left:962px;top:179px;width:83px;height:21px;background:#eaf1fa;border:1px solid #7eb1e2;border-radius:10.5px;box-sizing:border-box;"></div>
<div class="t " style="left:973px;top:183px;font-size:8px;line-height:13px;color:#2a2a2a;letter-spacing:0.017px;-webkit-text-stroke:0.1px #2a2a2a;">Dieu et la nature</div>
<div style="position:absolute;left:916px;top:202px;width:130px;height:25px;border:1px solid #dedede;border-top-width:3px;box-sizing:border-box;background:#fff;"></div>
<div style="position:absolute;left:917px;top:205px;width:128px;height:21px;background:#eaf1fa;border:1px solid #7eb1e2;border-radius:10.5px;box-sizing:border-box;"></div>
<div class="t " style="left:928px;top:209px;font-size:8px;line-height:13px;color:#2a2a2a;letter-spacing:0.121px;-webkit-text-stroke:0.1px #2a2a2a;">Déterminisme et libre arbitre</div>
<div style="position:absolute;left:863px;top:228px;width:183px;height:25px;border:1px solid #dedede;border-top-width:3px;box-sizing:border-box;background:#fff;"></div>
<div style="position:absolute;left:864px;top:231px;width:181px;height:21px;background:#eaf1fa;border:1px solid #7eb1e2;border-radius:10.5px;box-sizing:border-box;"></div>
<div class="t " style="left:875px;top:235px;font-size:8px;line-height:13px;color:#2a2a2a;letter-spacing:0.006px;-webkit-text-stroke:0.1px #2a2a2a;">Conception du temps et de l'espace absolus</div>
<div style="position:absolute;left:949px;top:253px;width:97px;height:25px;border:1px solid #dedede;border-top-width:3px;box-sizing:border-box;background:#fff;"></div>
<div style="position:absolute;left:950px;top:256px;width:95px;height:21px;background:#eaf1fa;border:1px solid #7eb1e2;border-radius:10.5px;box-sizing:border-box;"></div>
<div class="t " style="left:961px;top:260px;font-size:8px;line-height:13px;color:#2a2a2a;letter-spacing:0.056px;-webkit-text-stroke:0.1px #2a2a2a;">Nature de la réalité:</div>
<div style="position:absolute;left:875px;top:279px;width:171px;height:25px;border:1px solid #dedede;border-top-width:3px;box-sizing:border-box;background:#fff;"></div>
<div style="position:absolute;left:876px;top:282px;width:169px;height:21px;background:#eaf1fa;border:1px solid #7eb1e2;border-radius:10.5px;box-sizing:border-box;"></div>
<div class="t " style="left:887px;top:286px;font-size:8px;line-height:13px;color:#2a2a2a;letter-spacing:0.064px;-webkit-text-stroke:0.1px #2a2a2a;">Règles pour la formulation d'hypothèses</div>
<div style="position:absolute;left:886px;top:305px;width:160px;height:25px;border:1px solid #dedede;border-top-width:3px;box-sizing:border-box;background:#fff;"></div>
<div style="position:absolute;left:887px;top:308px;width:158px;height:21px;background:#eaf1fa;border:1px solid #7eb1e2;border-radius:10.5px;box-sizing:border-box;"></div>
<div class="t " style="left:898px;top:312px;font-size:8px;line-height:13px;color:#2a2a2a;letter-spacing:0.092px;-webkit-text-stroke:0.1px #2a2a2a;">Rôle de l'induction et de la déduction</div>
<div style="position:absolute;left:834px;top:331px;width:212px;height:25px;border:1px solid #dedede;border-top-width:3px;box-sizing:border-box;background:#fff;"></div>
<div style="position:absolute;left:835px;top:334px;width:210px;height:21px;background:#eaf1fa;border:1px solid #7eb1e2;border-radius:10.5px;box-sizing:border-box;"></div>
<div class="t " style="left:846px;top:338px;font-size:8px;line-height:13px;color:#2a2a2a;letter-spacing:0.108px;-webkit-text-stroke:0.1px #2a2a2a;">Importance de l'observation et de l'expérimentation</div>
<div style="position:absolute;left:924px;top:356px;width:122px;height:25px;border:1px solid #dedede;border-top-width:3px;box-sizing:border-box;background:#fff;"></div>
<div style="position:absolute;left:925px;top:359px;width:120px;height:21px;background:#eaf1fa;border:1px solid #7eb1e2;border-radius:10.5px;box-sizing:border-box;"></div>
<div class="t " style="left:936px;top:363px;font-size:8px;line-height:13px;color:#2a2a2a;letter-spacing:0.134px;-webkit-text-stroke:0.1px #2a2a2a;">Méthodologie scientifique:</div>
<div style="position:absolute;left:967px;top:382px;width:79px;height:25px;border:1px solid #dedede;border-top-width:3px;box-sizing:border-box;background:#fff;"></div>
<div style="position:absolute;left:968px;top:385px;width:77px;height:21px;background:#eaf1fa;border:1px solid #7eb1e2;border-radius:10.5px;box-sizing:border-box;"></div>
<div class="t " style="left:979px;top:389px;font-size:8px;line-height:13px;color:#2a2a2a;letter-spacing:0.034px;-webkit-text-stroke:0.1px #2a2a2a;">4. Philosophie:</div>
<div style="position:absolute;left:844px;top:408px;width:202px;height:25px;border:1px solid #dedede;border-top-width:3px;box-sizing:border-box;background:#fff;"></div>
<div style="position:absolute;left:845px;top:411px;width:200px;height:21px;background:#eaf1fa;border:1px solid #7eb1e2;border-radius:10.5px;box-sizing:border-box;"></div>
<div class="t " style="left:856px;top:415px;font-size:8px;line-height:13px;color:#2a2a2a;letter-spacing:-0.031px;-webkit-text-stroke:0.1px #2a2a2a;">Controverses avec les théologiens de son époque</div>
<div style="position:absolute;left:896px;top:434px;width:150px;height:25px;border:1px solid #dedede;border-top-width:3px;box-sizing:border-box;background:#fff;"></div>
<div style="position:absolute;left:897px;top:437px;width:148px;height:21px;background:#eaf1fa;border:1px solid #7eb1e2;border-radius:10.5px;box-sizing:border-box;"></div>
<div class="t " style="left:908px;top:441px;font-size:8px;line-height:13px;color:#2a2a2a;-webkit-text-stroke:0.1px #2a2a2a;">Étude de la Bible et des prophéties</div>
<div style="position:absolute;left:867px;top:459px;width:179px;height:25px;border:1px solid #dedede;border-top-width:3px;box-sizing:border-box;background:#fff;"></div>
<div style="position:absolute;left:868px;top:462px;width:177px;height:21px;background:#eaf1fa;border:1px solid #7eb1e2;border-radius:10.5px;box-sizing:border-box;"></div>
<div class="t " style="left:879px;top:466px;font-size:8px;line-height:13px;color:#2a2a2a;letter-spacing:0.069px;-webkit-text-stroke:0.1px #2a2a2a;">Interprétation religieuse des lois naturelles</div>
<div style="position:absolute;left:982px;top:485px;width:64px;height:25px;border:1px solid #dedede;border-top-width:3px;box-sizing:border-box;background:#fff;"></div>
<div style="position:absolute;left:983px;top:488px;width:62px;height:21px;background:#eaf1fa;border:1px solid #7eb1e2;border-radius:10.5px;box-sizing:border-box;"></div>
<div class="t " style="left:994px;top:492px;font-size:8px;line-height:13px;color:#2a2a2a;letter-spacing:0.064px;-webkit-text-stroke:0.1px #2a2a2a;">Théologie:</div>
<div style="position:absolute;left:879px;top:511px;width:167px;height:25px;border:1px solid #dedede;border-top-width:3px;box-sizing:border-box;background:#fff;"></div>
<div style="position:absolute;left:880px;top:514px;width:165px;height:21px;background:#eaf1fa;border:1px solid #7eb1e2;border-radius:10.5px;box-sizing:border-box;"></div>
<div class="t " style="left:891px;top:518px;font-size:8px;line-height:13px;color:#2a2a2a;letter-spacing:0.133px;-webkit-text-stroke:0.1px #2a2a2a;">Interprétation symbolique de l'alchimie</div>
<div style="position:absolute;left:888px;top:537px;width:158px;height:25px;border:1px solid #dedede;border-top-width:3px;box-sizing:border-box;background:#fff;"></div>
<div style="position:absolute;left:889px;top:540px;width:156px;height:21px;background:#eaf1fa;border:1px solid #7eb1e2;border-radius:10.5px;box-sizing:border-box;"></div>
<div class="t " style="left:900px;top:544px;font-size:8px;line-height:13px;color:#2a2a2a;letter-spacing:0.010px;-webkit-text-stroke:0.1px #2a2a2a;">Étude des écrits alchimiques anciens</div>
<div style="position:absolute;left:875px;top:562px;width:171px;height:25px;border:1px solid #dedede;border-top-width:3px;box-sizing:border-box;background:#fff;"></div>
<div style="position:absolute;left:876px;top:565px;width:169px;height:21px;background:#eaf1fa;border:1px solid #7eb1e2;border-radius:10.5px;box-sizing:border-box;"></div>
<div class="t " style="left:887px;top:569px;font-size:8px;line-height:13px;color:#2a2a2a;letter-spacing:0.009px;-webkit-text-stroke:0.1px #2a2a2a;">Travaux sur la transmutation des métaux</div>
<div style="position:absolute;left:931px;top:588px;width:115px;height:25px;border:1px solid #dedede;border-top-width:3px;box-sizing:border-box;background:#fff;"></div>
<div style="position:absolute;left:932px;top:591px;width:113px;height:21px;background:#eaf1fa;border:1px solid #7eb1e2;border-radius:10.5px;box-sizing:border-box;"></div>
<div class="t " style="left:943px;top:595px;font-size:8px;line-height:13px;color:#2a2a2a;letter-spacing:-0.016px;-webkit-text-stroke:0.1px #2a2a2a;">Recherches alchimiques:</div>
<div style="position:absolute;left:934px;top:614px;width:112px;height:25px;border:1px solid #dedede;border-top-width:3px;box-sizing:border-box;background:#fff;"></div>
<div style="position:absolute;left:935px;top:617px;width:110px;height:21px;background:#eaf1fa;border:1px solid #7eb1e2;border-radius:10.5px;box-sizing:border-box;"></div>
<div class="t " style="left:946px;top:621px;font-size:8px;line-height:13px;color:#2a2a2a;letter-spacing:0.060px;-webkit-text-stroke:0.1px #2a2a2a;">3. Alchimie et théologie:</div>
<div style="position:absolute;left:886px;top:640px;width:160px;height:25px;border:1px solid #dedede;border-top-width:3px;box-sizing:border-box;background:#fff;"></div>
<div style="position:absolute;left:887px;top:643px;width:158px;height:21px;background:#eaf1fa;border:1px solid #7eb1e2;border-radius:10.5px;box-sizing:border-box;"></div>
<div class="t " style="left:898px;top:647px;font-size:8px;line-height:13px;color:#2a2a2a;letter-spacing:0.028px;-webkit-text-stroke:0.1px #2a2a2a;">Contributions à la théorie des marées</div>
<div style="position:absolute;left:848px;top:665px;width:198px;height:25px;border:1px solid #dedede;border-top-width:3px;box-sizing:border-box;background:#fff;"></div>
<div style="position:absolute;left:849px;top:668px;width:196px;height:21px;background:#eaf1fa;border:1px solid #7eb1e2;border-radius:10.5px;box-sizing:border-box;"></div>
<div class="t " style="left:860px;top:672px;font-size:8px;line-height:13px;color:#2a2a2a;letter-spacing:0.043px;-webkit-text-stroke:0.1px #2a2a2a;">Découverte de la loi de la gravitation universelle</div>
<div style="position:absolute;left:856px;top:691px;width:190px;height:25px;border:1px solid #dedede;border-top-width:3px;box-sizing:border-box;background:#fff;"></div>
<div style="position:absolute;left:857px;top:694px;width:188px;height:21px;background:#eaf1fa;border:1px solid #7eb1e2;border-radius:10.5px;box-sizing:border-box;"></div>
<div class="t " style="left:868px;top:698px;font-size:8px;line-height:13px;color:#2a2a2a;letter-spacing:-0.012px;-webkit-text-stroke:0.1px #2a2a2a;">Lois de Kepler sur le mouvement des planètes</div>
<div style="position:absolute;left:976px;top:717px;width:70px;height:25px;border:1px solid #dedede;border-top-width:3px;box-sizing:border-box;background:#fff;"></div>
<div style="position:absolute;left:977px;top:720px;width:68px;height:21px;background:#eaf1fa;border:1px solid #7eb1e2;border-radius:10.5px;box-sizing:border-box;"></div>
<div class="t " style="left:988px;top:724px;font-size:8px;line-height:13px;color:#2a2a2a;letter-spacing:0.119px;-webkit-text-stroke:0.1px #2a2a2a;">Astronomie:</div>
<div style="position:absolute;left:1163px;top:176px;width:92px;height:25px;border:1px solid #dedede;border-top-width:3px;box-sizing:border-box;background:#fff;"></div>
<div style="position:absolute;left:1164px;top:179px;width:90px;height:21px;background:#eaf1fa;border:1px solid #7eb1e2;border-radius:10.5px;box-sizing:border-box;"></div>
<div class="t " style="left:1175px;top:183px;font-size:8px;line-height:13px;color:#2a2a2a;letter-spacing:0.011px;-webkit-text-stroke:0.1px #2a2a2a;">1. Mathématiques:</div>
<div style="position:absolute;left:1163px;top:202px;width:96px;height:25px;border:1px solid #dedede;border-top-width:3px;box-sizing:border-box;background:#fff;"></div>
<div style="position:absolute;left:1164px;top:205px;width:94px;height:21px;background:#eaf1fa;border:1px solid #7eb1e2;border-radius:10.5px;box-sizing:border-box;"></div>
<div class="t " style="left:1175px;top:209px;font-size:8px;line-height:13px;color:#2a2a2a;letter-spacing:0.073px;-webkit-text-stroke:0.1px #2a2a2a;">Calcul infinitésimal:</div>
<div style="position:absolute;left:1163px;top:228px;width:263px;height:25px;border:1px solid #dedede;border-top-width:3px;box-sizing:border-box;background:#fff;"></div>
<div style="position:absolute;left:1164px;top:231px;width:261px;height:21px;background:#eaf1fa;border:1px solid #7eb1e2;border-radius:10.5px;box-sizing:border-box;"></div>
<div class="t " style="left:1175px;top:235px;font-size:8px;line-height:13px;color:#2a2a2a;letter-spacing:0.093px;-webkit-text-stroke:0.1px #2a2a2a;">Développements du théorème fondamental du calcul infinitésimal</div>
<div style="position:absolute;left:1163px;top:253px;width:156px;height:25px;border:1px solid #dedede;border-top-width:3px;box-sizing:border-box;background:#fff;"></div>
<div style="position:absolute;left:1164px;top:256px;width:154px;height:21px;background:#eaf1fa;border:1px solid #7eb1e2;border-radius:10.5px;box-sizing:border-box;"></div>
<div class="t " style="left:1175px;top:260px;font-size:8px;line-height:13px;color:#2a2a2a;-webkit-text-stroke:0.1px #2a2a2a;">Méthode des fluxions et des fluantes</div>
<div style="position:absolute;left:1163px;top:279px;width:181px;height:25px;border:1px solid #dedede;border-top-width:3px;box-sizing:border-box;background:#fff;"></div>
<div style="position:absolute;left:1164px;top:282px;width:179px;height:21px;background:#eaf1fa;border:1px solid #7eb1e2;border-radius:10.5px;box-sizing:border-box;"></div>
<div class="t " style="left:1175px;top:286px;font-size:8px;line-height:13px;color:#2a2a2a;letter-spacing:0.015px;-webkit-text-stroke:0.1px #2a2a2a;">Applications à la géométrie et à la physique</div>
<div style="position:absolute;left:1163px;top:305px;width:55px;height:25px;border:1px solid #dedede;border-top-width:3px;box-sizing:border-box;background:#fff;"></div>
<div style="position:absolute;left:1164px;top:308px;width:53px;height:21px;background:#eaf1fa;border:1px solid #7eb1e2;border-radius:10.5px;box-sizing:border-box;"></div>
<div class="t " style="left:1175px;top:312px;font-size:8px;line-height:13px;color:#2a2a2a;letter-spacing:-0.100px;-webkit-text-stroke:0.1px #2a2a2a;">Algèbre:</div>
<div style="position:absolute;left:1163px;top:331px;width:109px;height:25px;border:1px solid #dedede;border-top-width:3px;box-sizing:border-box;background:#fff;"></div>
<div style="position:absolute;left:1164px;top:334px;width:107px;height:21px;background:#eaf1fa;border:1px solid #7eb1e2;border-radius:10.5px;box-sizing:border-box;"></div>
<div class="t " style="left:1175px;top:338px;font-size:8px;line-height:13px;color:#2a2a2a;letter-spacing:-0.007px;-webkit-text-stroke:0.1px #2a2a2a;">Théorie des polynômes</div>
<div style="position:absolute;left:1163px;top:356px;width:154px;height:25px;border:1px solid #dedede;border-top-width:3px;box-sizing:border-box;background:#fff;"></div>
<div style="position:absolute;left:1164px;top:359px;width:152px;height:21px;background:#eaf1fa;border:1px solid #7eb1e2;border-radius:10.5px;box-sizing:border-box;"></div>
<div class="t " style="left:1175px;top:363px;font-size:8px;line-height:13px;color:#2a2a2a;letter-spacing:0.057px;-webkit-text-stroke:0.1px #2a2a2a;">Méthodes de résolution d'équations</div>
<div style="position:absolute;left:1163px;top:382px;width:143px;height:25px;border:1px solid #dedede;border-top-width:3px;box-sizing:border-box;background:#fff;"></div>
<div style="position:absolute;left:1164px;top:385px;width:141px;height:21px;background:#eaf1fa;border:1px solid #7eb1e2;border-radius:10.5px;box-sizing:border-box;"></div>
<div class="t " style="left:1175px;top:389px;font-size:8px;line-height:13px;color:#2a2a2a;letter-spacing:0.087px;-webkit-text-stroke:0.1px #2a2a2a;">Contributions à l'algèbre linéaire</div>
<div style="position:absolute;left:1163px;top:408px;width:65px;height:25px;border:1px solid #dedede;border-top-width:3px;box-sizing:border-box;background:#fff;"></div>
<div style="position:absolute;left:1164px;top:411px;width:63px;height:21px;background:#eaf1fa;border:1px solid #7eb1e2;border-radius:10.5px;box-sizing:border-box;"></div>
<div class="t " style="left:1175px;top:415px;font-size:8px;line-height:13px;color:#2a2a2a;letter-spacing:-0.058px;-webkit-text-stroke:0.1px #2a2a2a;">Géométrie:</div>
<div style="position:absolute;left:1163px;top:434px;width:103px;height:25px;border:1px solid #dedede;border-top-width:3px;box-sizing:border-box;background:#fff;"></div>
<div style="position:absolute;left:1164px;top:437px;width:101px;height:21px;background:#eaf1fa;border:1px solid #7eb1e2;border-radius:10.5px;box-sizing:border-box;"></div>
<div class="t " style="left:1175px;top:441px;font-size:8px;line-height:13px;color:#2a2a2a;letter-spacing:0.048px;-webkit-text-stroke:0.1px #2a2a2a;">Géométrie analytique</div>
<div style="position:absolute;left:1163px;top:459px;width:102px;height:25px;border:1px solid #dedede;border-top-width:3px;box-sizing:border-box;background:#fff;"></div>
<div style="position:absolute;left:1164px;top:462px;width:100px;height:21px;background:#eaf1fa;border:1px solid #7eb1e2;border-radius:10.5px;box-sizing:border-box;"></div>
<div class="t " style="left:1175px;top:466px;font-size:8px;line-height:13px;color:#2a2a2a;letter-spacing:0.067px;-webkit-text-stroke:0.1px #2a2a2a;">Optique géométrique</div>
<div style="position:absolute;left:1163px;top:485px;width:153px;height:25px;border:1px solid #dedede;border-top-width:3px;box-sizing:border-box;background:#fff;"></div>
<div style="position:absolute;left:1164px;top:488px;width:151px;height:21px;background:#eaf1fa;border:1px solid #7eb1e2;border-radius:10.5px;box-sizing:border-box;"></div>
<div class="t " style="left:1175px;top:492px;font-size:8px;line-height:13px;color:#2a2a2a;letter-spacing:0.034px;-webkit-text-stroke:0.1px #2a2a2a;">Développements du calcul vectoriel</div>
<div style="position:absolute;left:1163px;top:511px;width:68px;height:25px;border:1px solid #dedede;border-top-width:3px;box-sizing:border-box;background:#fff;"></div>
<div style="position:absolute;left:1164px;top:514px;width:66px;height:21px;background:#eaf1fa;border:1px solid #7eb1e2;border-radius:10.5px;box-sizing:border-box;"></div>
<div class="t " style="left:1175px;top:518px;font-size:8px;line-height:13px;color:#2a2a2a;letter-spacing:-0.169px;-webkit-text-stroke:0.1px #2a2a2a;">2. Physique:</div>
<div style="position:absolute;left:1163px;top:537px;width:102px;height:25px;border:1px solid #dedede;border-top-width:3px;box-sizing:border-box;background:#fff;"></div>
<div style="position:absolute;left:1164px;top:540px;width:100px;height:21px;background:#eaf1fa;border:1px solid #7eb1e2;border-radius:10.5px;box-sizing:border-box;"></div>
<div class="t " style="left:1175px;top:544px;font-size:8px;line-height:13px;color:#2a2a2a;letter-spacing:-0.047px;-webkit-text-stroke:0.1px #2a2a2a;">Mécanique classique:</div>
<div style="position:absolute;left:1163px;top:562px;width:96px;height:25px;border:1px solid #dedede;border-top-width:3px;box-sizing:border-box;background:#fff;"></div>
<div style="position:absolute;left:1164px;top:565px;width:94px;height:21px;background:#eaf1fa;border:1px solid #7eb1e2;border-radius:10.5px;box-sizing:border-box;"></div>
<div class="t " style="left:1175px;top:569px;font-size:8px;line-height:13px;color:#2a2a2a;letter-spacing:0.010px;-webkit-text-stroke:0.1px #2a2a2a;">Lois du mouvement</div>
<div style="position:absolute;left:1163px;top:588px;width:136px;height:25px;border:1px solid #dedede;border-top-width:3px;box-sizing:border-box;background:#fff;"></div>
<div style="position:absolute;left:1164px;top:591px;width:134px;height:21px;background:#eaf1fa;border:1px solid #7eb1e2;border-radius:10.5px;box-sizing:border-box;"></div>
<div class="t " style="left:1175px;top:595px;font-size:8px;line-height:13px;color:#2a2a2a;-webkit-text-stroke:0.1px #2a2a2a;">Loi de la gravitation universelle</div>
<div style="position:absolute;left:1163px;top:614px;width:106px;height:25px;border:1px solid #dedede;border-top-width:3px;box-sizing:border-box;background:#fff;"></div>
<div style="position:absolute;left:1164px;top:617px;width:104px;height:21px;background:#eaf1fa;border:1px solid #7eb1e2;border-radius:10.5px;box-sizing:border-box;"></div>
<div class="t " style="left:1175px;top:621px;font-size:8px;line-height:13px;color:#2a2a2a;letter-spacing:0.062px;-webkit-text-stroke:0.1px #2a2a2a;">Principia Mathematica</div>
<div style="position:absolute;left:1163px;top:640px;width:56px;height:25px;border:1px solid #b9b9b9;border-top-width:3px;box-sizing:border-box;background:#fff;"></div>
<div style="position:absolute;left:1164px;top:643px;width:54px;height:21px;background:#eaf1fa;border:1px solid #7eb1e2;border-radius:10.5px;box-sizing:border-box;"></div>
<div class="t " style="left:1175px;top:647px;font-size:8px;line-height:13px;color:#2a2a2a;letter-spacing:-0.031px;-webkit-text-stroke:0.1px #2a2a2a;">Optique:</div>
<div style="position:absolute;left:1163px;top:665px;width:98px;height:25px;border:1px solid #dedede;border-top-width:3px;box-sizing:border-box;background:#fff;"></div>
<div style="position:absolute;left:1164px;top:668px;width:96px;height:21px;background:#eaf1fa;border:1px solid #7eb1e2;border-radius:10.5px;box-sizing:border-box;"></div>
<div class="t " style="left:1175px;top:672px;font-size:8px;line-height:13px;color:#2a2a2a;-webkit-text-stroke:0.1px #2a2a2a;">Nature de la lumière</div>
<div style="position:absolute;left:1163px;top:691px;width:159px;height:25px;border:1px solid #dedede;border-top-width:3px;box-sizing:border-box;background:#fff;"></div>
<div style="position:absolute;left:1164px;top:694px;width:157px;height:21px;background:#eaf1fa;border:1px solid #7eb1e2;border-radius:10.5px;box-sizing:border-box;"></div>
<div class="t " style="left:1175px;top:698px;font-size:8px;line-height:13px;color:#2a2a2a;letter-spacing:0.052px;-webkit-text-stroke:0.1px #2a2a2a;">Décomposition de la lumière blanche</div>
<div style="position:absolute;left:1163px;top:717px;width:99px;height:25px;border:1px solid #dedede;border-top-width:3px;box-sizing:border-box;background:#fff;"></div>
<div style="position:absolute;left:1164px;top:720px;width:97px;height:21px;background:#eaf1fa;border:1px solid #7eb1e2;border-radius:10.5px;box-sizing:border-box;"></div>
<div class="t " style="left:1175px;top:724px;font-size:8px;line-height:13px;color:#2a2a2a;letter-spacing:-0.086px;-webkit-text-stroke:0.1px #2a2a2a;">Théorie des couleurs</div>
<svg style="position:absolute;left:0;top:0" width="1536" height="819"><g fill="none" stroke="#5290d2" stroke-width="1.3"><path d="M1045 189.5 H1062" /><circle cx="1057.5" cy="189.5" r="1.8" fill="#fff" stroke-width="1.1"/><path d="M1045 215.5 H1062" /><circle cx="1057.5" cy="215.5" r="1.8" fill="#fff" stroke-width="1.1"/><path d="M1045 241.5 H1062" /><circle cx="1057.5" cy="241.5" r="1.8" fill="#fff" stroke-width="1.1"/><path d="M1045 266.5 H1062" /><circle cx="1057.5" cy="266.5" r="1.8" fill="#fff" stroke-width="1.1"/><path d="M1045 292.5 H1062" /><circle cx="1057.5" cy="292.5" r="1.8" fill="#fff" stroke-width="1.1"/><path d="M1045 318.5 H1062" /><circle cx="1057.5" cy="318.5" r="1.8" fill="#fff" stroke-width="1.1"/><path d="M1045 344.5 H1062" /><circle cx="1057.5" cy="344.5" r="1.8" fill="#fff" stroke-width="1.1"/><path d="M1045 369.5 H1062" /><circle cx="1057.5" cy="369.5" r="1.8" fill="#fff" stroke-width="1.1"/><path d="M1045 395.5 H1062" /><circle cx="1057.5" cy="395.5" r="1.8" fill="#fff" stroke-width="1.1"/><path d="M1045 421.5 H1062" /><circle cx="1057.5" cy="421.5" r="1.8" fill="#fff" stroke-width="1.1"/><path d="M1045 447.5 H1062" /><circle cx="1057.5" cy="447.5" r="1.8" fill="#fff" stroke-width="1.1"/><path d="M1045 472.5 H1062" /><circle cx="1057.5" cy="472.5" r="1.8" fill="#fff" stroke-width="1.1"/><path d="M1045 498.5 H1062" /><circle cx="1057.5" cy="498.5" r="1.8" fill="#fff" stroke-width="1.1"/><path d="M1045 524.5 H1062" /><circle cx="1057.5" cy="524.5" r="1.8" fill="#fff" stroke-width="1.1"/><path d="M1045 550.5 H1062" /><circle cx="1057.5" cy="550.5" r="1.8" fill="#fff" stroke-width="1.1"/><path d="M1045 575.5 H1062" /><circle cx="1057.5" cy="575.5" r="1.8" fill="#fff" stroke-width="1.1"/><path d="M1045 601.5 H1062" /><circle cx="1057.5" cy="601.5" r="1.8" fill="#fff" stroke-width="1.1"/><path d="M1045 627.5 H1062" /><circle cx="1057.5" cy="627.5" r="1.8" fill="#fff" stroke-width="1.1"/><path d="M1045 653.5 H1062" /><circle cx="1057.5" cy="653.5" r="1.8" fill="#fff" stroke-width="1.1"/><path d="M1045 678.5 H1062" /><circle cx="1057.5" cy="678.5" r="1.8" fill="#fff" stroke-width="1.1"/><path d="M1045 704.5 H1062" /><circle cx="1057.5" cy="704.5" r="1.8" fill="#fff" stroke-width="1.1"/><path d="M1045 730.5 H1062" /><circle cx="1057.5" cy="730.5" r="1.8" fill="#fff" stroke-width="1.1"/><path d="M1146 189.5 H1164" /><circle cx="1152" cy="189.5" r="1.8" fill="#fff" stroke-width="1.1"/><path d="M1146 215.5 H1164" /><circle cx="1152" cy="215.5" r="1.8" fill="#fff" stroke-width="1.1"/><path d="M1146 241.5 H1164" /><circle cx="1152" cy="241.5" r="1.8" fill="#fff" stroke-width="1.1"/><path d="M1146 266.5 H1164" /><circle cx="1152" cy="266.5" r="1.8" fill="#fff" stroke-width="1.1"/><path d="M1146 292.5 H1164" /><circle cx="1152" cy="292.5" r="1.8" fill="#fff" stroke-width="1.1"/><path d="M1146 318.5 H1164" /><circle cx="1152" cy="318.5" r="1.8" fill="#fff" stroke-width="1.1"/><path d="M1146 344.5 H1164" /><circle cx="1152" cy="344.5" r="1.8" fill="#fff" stroke-width="1.1"/><path d="M1146 369.5 H1164" /><circle cx="1152" cy="369.5" r="1.8" fill="#fff" stroke-width="1.1"/><path d="M1146 395.5 H1164" /><circle cx="1152" cy="395.5" r="1.8" fill="#fff" stroke-width="1.1"/><path d="M1146 421.5 H1164" /><circle cx="1152" cy="421.5" r="1.8" fill="#fff" stroke-width="1.1"/><path d="M1146 447.5 H1164" /><circle cx="1152" cy="447.5" r="1.8" fill="#fff" stroke-width="1.1"/><path d="M1146 472.5 H1164" /><circle cx="1152" cy="472.5" r="1.8" fill="#fff" stroke-width="1.1"/><path d="M1146 498.5 H1164" /><circle cx="1152" cy="498.5" r="1.8" fill="#fff" stroke-width="1.1"/><path d="M1146 524.5 H1164" /><circle cx="1152" cy="524.5" r="1.8" fill="#fff" stroke-width="1.1"/><path d="M1146 550.5 H1164" /><circle cx="1152" cy="550.5" r="1.8" fill="#fff" stroke-width="1.1"/><path d="M1146 575.5 H1164" /><circle cx="1152" cy="575.5" r="1.8" fill="#fff" stroke-width="1.1"/><path d="M1146 601.5 H1164" /><circle cx="1152" cy="601.5" r="1.8" fill="#fff" stroke-width="1.1"/><path d="M1146 627.5 H1164" /><circle cx="1152" cy="627.5" r="1.8" fill="#fff" stroke-width="1.1"/><path d="M1146 653.5 H1164" /><circle cx="1152" cy="653.5" r="1.8" fill="#fff" stroke-width="1.1"/><path d="M1146 678.5 H1164" /><circle cx="1152" cy="678.5" r="1.8" fill="#fff" stroke-width="1.1"/><path d="M1146 704.5 H1164" /><circle cx="1152" cy="704.5" r="1.8" fill="#fff" stroke-width="1.1"/><path d="M1146 730.5 H1164" /><circle cx="1152" cy="730.5" r="1.8" fill="#fff" stroke-width="1.1"/><path d="M1057 189.5 Q1062.5 189.5 1062.5 194.5 V725.5 Q1062.5 730.5 1057 730.5"/><path d="M1152 189.5 Q1146.5 189.5 1146.5 194.5 V725.5 Q1146.5 730.5 1152 730.5"/><path d="M1062 460.5 H1066 M1142 460.5 H1146"/></g></svg>
<div style="position:absolute;left:1065px;top:445px;width:78px;height:31px;background:#eaf1fa;border:1.5px solid #7eb1e2;border-radius:5px;box-sizing:border-box;"></div>
<div class="t " style="left:1077px;top:453px;font-size:10.5px;line-height:14px;color:#5a5a5a;letter-spacing:-0.413px;">Sujet central</div>
<svg style="position:absolute;left:1186px;top:635px" width="8" height="8" viewBox="0 0 8 8"><path d="M1 4 L4 1 L7 4 L4 7Z" fill="#d4d4d4" stroke="#bdbdbd" stroke-width="0.8"/><path d="M4 2.8 V5.2 M2.8 4 H5.2" stroke="#fff" stroke-width="0.8"/></svg>
<svg style="position:absolute;left:1186px;top:663px" width="8" height="8" viewBox="0 0 8 8"><path d="M1 4 L4 1 L7 4 L4 7Z" fill="#d4d4d4" stroke="#bdbdbd" stroke-width="0.8"/><path d="M4 2.8 V5.2 M2.8 4 H5.2" stroke="#fff" stroke-width="0.8"/></svg>
<svg style="position:absolute;left:1158px;top:649.5px" width="8" height="8" viewBox="0 0 8 8"><path d="M1 4 L4 1 L7 4 L4 7Z" fill="#d4d4d4" stroke="#bdbdbd" stroke-width="0.8"/><path d="M4 2.8 V5.2 M2.8 4 H5.2" stroke="#fff" stroke-width="0.8"/></svg>
<svg style="position:absolute;left:1217px;top:649.5px" width="8" height="8" viewBox="0 0 8 8"><path d="M1 4 L4 1 L7 4 L4 7Z" fill="#d4d4d4" stroke="#bdbdbd" stroke-width="0.8"/><path d="M4 2.8 V5.2 M2.8 4 H5.2" stroke="#fff" stroke-width="0.8"/></svg>
<svg style="position:absolute;left:1280px;top:271px" width="26" height="3" viewBox="0 0 26 3"><path d="M0 1.5 Q1 0 2 1.5 T4 1.5 T6 1.5 T8 1.5 T10 1.5 T12 1.5 T14 1.5 T16 1.5 T18 1.5 T20 1.5 T22 1.5 T24 1.5 T26 1.5" fill="none" stroke="#e03030" stroke-width="0.8"/></svg>
<svg style="position:absolute;left:1175px;top:632px" width="27" height="3" viewBox="0 0 27 3"><path d="M0 1.5 Q1 0 2 1.5 T4 1.5 T6 1.5 T8 1.5 T10 1.5 T12 1.5 T14 1.5 T16 1.5 T18 1.5 T20 1.5 T22 1.5 T24 1.5 T26 1.5" fill="none" stroke="#e03030" stroke-width="0.8"/></svg>
<div style="position:absolute;left:1427px;top:712px;width:49px;height:32px;background:#f5f6f8;border-radius:50%;"></div>
<svg style="position:absolute;left:1443px;top:717px" width="17" height="21" viewBox="0 0 17 21"><path d="M8.5 20 Q2 12 2 8 A6.5 6.5 0 0 1 15 8 Q15 12 8.5 20Z" fill="#9a9a9a"/><circle cx="8.5" cy="8" r="2.8" fill="#f3f4f6"/></svg>
<svg style="position:absolute;left:1505px;top:180px" width="30" height="31"><path d="M0 0.5 H24 L29.5 6 V30 H0" fill="#e9e9e9" stroke="#c8c8c8" stroke-width="1"/></svg>
<svg style="position:absolute;left:1505px;top:211px" width="30" height="31"><path d="M0 0.5 H24 L29.5 6 V30 H0" fill="#e9e9e9" stroke="#c8c8c8" stroke-width="1"/></svg>
<svg style="position:absolute;left:1505px;top:241px" width="30" height="31"><path d="M0 0.5 H24 L29.5 6 V30 H0" fill="#e9e9e9" stroke="#c8c8c8" stroke-width="1"/></svg>
<svg style="position:absolute;left:1505px;top:272px" width="30" height="31"><path d="M0 0.5 H24 L29.5 6 V30 H0" fill="#e9e9e9" stroke="#c8c8c8" stroke-width="1"/></svg>
<svg style="position:absolute;left:1505px;top:302px" width="30" height="31"><path d="M0 0.5 H24 L29.5 6 V30 H0" fill="#e9e9e9" stroke="#c8c8c8" stroke-width="1"/></svg>
<svg style="position:absolute;left:1505px;top:333px" width="30" height="31"><path d="M0 0.5 H24 L29.5 6 V30 H0" fill="#e9e9e9" stroke="#c8c8c8" stroke-width="1"/></svg>
<svg style="position:absolute;left:1505px;top:363px" width="30" height="31"><path d="M0 0.5 H24 L29.5 6 V30 H0" fill="#e9e9e9" stroke="#c8c8c8" stroke-width="1"/></svg>
<svg style="position:absolute;left:1505px;top:394px" width="30" height="31"><path d="M0 0.5 H24 L29.5 6 V30 H0" fill="#e9e9e9" stroke="#c8c8c8" stroke-width="1"/></svg>
<svg style="position:absolute;left:1505px;top:424px" width="30" height="31"><path d="M0 0.5 H24 L29.5 6 V30 H0" fill="#e9e9e9" stroke="#c8c8c8" stroke-width="1"/></svg>
<svg style="position:absolute;left:1505px;top:455px" width="30" height="31"><path d="M0 0.5 H24 L29.5 6 V30 H0" fill="#e9e9e9" stroke="#c8c8c8" stroke-width="1"/></svg>
<svg style="position:absolute;left:1505px;top:486px" width="30" height="31"><path d="M0 0.5 H24 L29.5 6 V30 H0" fill="#e9e9e9" stroke="#c8c8c8" stroke-width="1"/></svg>
<svg style="position:absolute;left:1509px;top:186px" width="18" height="18" viewBox="0 0 18 18"><rect x="1" y="1" width="9" height="9" rx="1.5" fill="#d13b3b"/><circle cx="12" cy="12" r="5.5" fill="#5fb04f"/><path d="M9.5 12 L11.5 14 L14.5 10.5" stroke="#fff" stroke-width="1.5" fill="none"/></svg>
<svg style="position:absolute;left:1509px;top:217px" width="18" height="18" viewBox="0 0 18 18"><rect x="1" y="3" width="14" height="13" rx="1.5" fill="#fff" stroke="#888" stroke-width="1.2"/><rect x="1" y="3" width="14" height="3" fill="#e89a2a"/><path d="M4 11 L6 13 L10 9" stroke="#5fb04f" stroke-width="1.5" fill="none"/><path d="M14 11 V16 M12 14 L14 16 L16 14" stroke="#5fb04f" stroke-width="1.2" fill="none"/></svg>
<svg style="position:absolute;left:1509px;top:247px" width="18" height="18" viewBox="0 0 18 18"><circle cx="9" cy="5" r="3.5" fill="none" stroke="#888" stroke-width="1.4"/><path d="M2 17 Q2 9 9 9 Q16 9 16 17Z" fill="none" stroke="#888" stroke-width="1.4"/></svg>
<svg style="position:absolute;left:1509px;top:278px" width="18" height="18" viewBox="0 0 18 18"><rect x="1" y="7" width="5" height="4" fill="none" stroke="#888" stroke-width="1.2"/><rect x="10" y="2" width="6" height="4" fill="none" stroke="#888" stroke-width="1.2"/><rect x="10" y="9" width="6" height="4" fill="none" stroke="#888" stroke-width="1.2"/><path d="M6 9 H8 V4 H10 M8 9 V11 H10" stroke="#888" fill="none"/><path d="M14 13 V17 M12 15 H16" stroke="#5fb04f" stroke-width="1.3"/></svg>
<svg style="position:absolute;left:1509px;top:308px" width="18" height="18" viewBox="0 0 18 18"><rect x="1" y="2" width="13" height="13" fill="#fff" stroke="#888" stroke-width="1.2"/><path d="M2 14 L6 8 L9 12 L11 10 L14 14Z" fill="#3b7fd4"/><circle cx="10" cy="5" r="1.5" fill="#3b7fd4"/><path d="M15 11 V17 M12 14 H18" stroke="#5fb04f" stroke-width="1.3"/></svg>
<svg style="position:absolute;left:1509px;top:339px" width="18" height="18" viewBox="0 0 18 18"><circle cx="7.5" cy="7.5" r="5.5" fill="none" stroke="#888" stroke-width="1.6"/><path d="M11.5 11.5 L16.5 16.5" stroke="#888" stroke-width="2"/></svg>
<svg style="position:absolute;left:1509px;top:369px" width="18" height="18" viewBox="0 0 18 18"><rect x="1" y="1" width="16" height="16" fill="#2e9aa8"/><path d="M4 7 V4 H7 M11 4 H14 V7 M14 11 V14 H11 M7 14 H4 V11" stroke="#fff" stroke-width="1.3" fill="none"/><rect x="7" y="7" width="4" height="4" fill="#fff"/></svg>
<svg style="position:absolute;left:1509px;top:400px" width="18" height="18" viewBox="0 0 18 18"><rect x="1" y="1" width="10" height="8" fill="#fff" stroke="#888" stroke-width="1.2"/><rect x="5" y="6" width="12" height="10" rx="1.5" fill="#fff" stroke="#3b7fd4" stroke-width="1.3"/><path d="M8 11 H14" stroke="#3b7fd4" stroke-width="1.5"/></svg>
<svg style="position:absolute;left:1509px;top:430px" width="18" height="18" viewBox="0 0 18 18"><rect x="6" y="3" width="11" height="11" fill="#fff" stroke="#1e6fc8" stroke-width="1.2"/><rect x="1" y="4" width="9" height="10" fill="#1e6fc8"/><circle cx="5.5" cy="9" r="2.5" fill="none" stroke="#fff" stroke-width="1.3"/><path d="M9 6 L12 9 L16 5" stroke="#1e6fc8" fill="none"/></svg>
<svg style="position:absolute;left:1509px;top:461px" width="18" height="18" viewBox="0 0 18 18"><circle cx="9" cy="9" r="7.5" fill="none" stroke="#888" stroke-width="1.3"/><ellipse cx="9" cy="9" rx="3.5" ry="7.5" fill="none" stroke="#888" stroke-width="1"/><path d="M1.5 9 H16.5 M3 5 H15 M3 13 H15" stroke="#888" stroke-width="1"/></svg>
<svg style="position:absolute;left:1509px;top:492px" width="18" height="18" viewBox="0 0 18 18"><rect x="6" y="2" width="11" height="14" fill="#fff" stroke="#5fb04f" stroke-width="1"/><path d="M9 5 H16 M9 8 H16 M9 11 H16 M9 14 H16" stroke="#5fb04f" stroke-width="0.8"/><rect x="1" y="3" width="9" height="12" fill="#1f7a3f"/><path d="M3 6 L8 12 M8 6 L3 12" stroke="#fff" stroke-width="1.4"/></svg>
<div style="position:absolute;left:773px;top:770px;width:730px;height:22px;background:#e9e9e9;"></div>
<svg style="position:absolute;left:773px;top:776px" width="7" height="10" viewBox="0 0 7 10"><path d="M6 1 L1 5 L6 9Z" fill="none" stroke="#999" stroke-width="1"/></svg>
<svg style="position:absolute;left:783px;top:770px" width="310" height="21"><path d="M0 0 L16 20.5 H188 L172 0Z" fill="#e4e4e4" stroke="#c9c9c9" stroke-width="1"/><path d="M190 20.5 L176 0.5 H307.5 V20.5Z" fill="#ffffff" stroke="#cfcfcf" stroke-width="1"/></svg>
<svg style="position:absolute;left:814px;top:772px" width="14" height="16" viewBox="0 0 14 16"><path d="M1 3 H6 L6 1 H13 V15 H1Z" fill="#3a63c8"/><rect x="3.5" y="7" width="7" height="5" fill="#fff"/><rect x="6" y="7" width="2" height="5" fill="#3a63c8"/></svg>
<div class="t " style="left:840px;top:773px;font-size:11px;line-height:15px;color:#5a5a5a;letter-spacing:-0.608px;">REDACTION D'ARTICLES*</div>
<svg style="position:absolute;left:987px;top:772px" width="14" height="16" viewBox="0 0 14 16"><path d="M1 3 H6 L6 1 H13 V15 H1Z" fill="#3a63c8"/><rect x="3.5" y="7" width="7" height="5" fill="#fff"/><rect x="6" y="7" width="2" height="5" fill="#3a63c8"/></svg>
<div class="t " style="left:1011px;top:773px;font-size:12.5px;line-height:15px;color:#3a3a3a;font-weight:bold;letter-spacing:-0.166px;">Map2*</div>
<svg style="position:absolute;left:1058px;top:776px" width="9" height="9" viewBox="0 0 9 9"><path d="M0.5 0.5 H5 M0.5 0.5 V5 M3 3 L8 8 M8 4.5 V8 H4.5" stroke="#777" stroke-width="1" fill="none"/></svg>
<svg style="position:absolute;left:1076px;top:776px" width="9" height="9" viewBox="0 0 9 9"><path d="M0.5 0.5 L8.5 8.5 M8.5 0.5 L0.5 8.5" stroke="#555" stroke-width="1.2"/></svg>
<svg style="position:absolute;left:1488px;top:777px" width="7" height="10" viewBox="0 0 7 10"><path d="M1 1 L6 5 L1 9Z" fill="none" stroke="#999" stroke-width="1"/></svg>
<div style="position:absolute;left:771px;top:792px;width:765px;height:24px;background:#f0f0f0;"></div>
<svg style="position:absolute;left:774px;top:795px" width="17" height="17" viewBox="0 0 17 17"><path d="M2 16 L12 6" stroke="#888" stroke-width="2.5"/><path d="M11 4 L15 1 L16 2 L13 6Z" fill="#777"/><path d="M10 6 L12 8" stroke="#3b7fd4" stroke-width="2.5"/></svg>
<div style="position:absolute;left:794px;top:794px;width:21px;height:20px;background:#d9d9d9;border:1px solid #5b7fb5;box-sizing:border-box;"></div>
<svg style="position:absolute;left:798px;top:796px" width="13" height="17" viewBox="0 0 13 17"><path d="M6.5 1 Q11.5 1 11.5 6 V11 Q11.5 16 6.5 16 Q1.5 16 1.5 11 V6 Q1.5 1 6.5 1Z" fill="#fff" stroke="#888" stroke-width="1"/><path d="M6.5 1 V7 H1.5" stroke="#888" stroke-width="0.8" fill="none"/><path d="M6 1.5 Q2 1.5 2 6.5 H6Z" fill="#3b7fd4"/></svg>
<svg style="position:absolute;left:1029px;top:798px" width="16" height="15" viewBox="0 0 16 15"><path d="M0.5 0.5 H15.5 L9.5 7 V14.5 H6.5 V7Z" fill="#7a7a7a"/></svg>
<svg style="position:absolute;left:1048px;top:803px" width="5" height="3" viewBox="0 0 5 3"><path d="M0 0 H5 L2.5 3Z" fill="#555"/></svg>
<svg style="position:absolute;left:1060px;top:798px" width="17" height="15" viewBox="0 0 17 15"><path d="M0.5 0.5 H13.5 L8.5 7 V14.5 H5.5 V7Z" fill="#7a7a7a"/><path d="M13 7 L10 11 H12.5 L11 15 L15.5 10 H13Z" fill="#7a7a7a"/></svg>
<svg style="position:absolute;left:1079px;top:803px" width="5" height="3" viewBox="0 0 5 3"><path d="M0 0 H5 L2.5 3Z" fill="#555"/></svg>
<svg style="position:absolute;left:1098px;top:797px" width="17" height="17" viewBox="0 0 17 17"><circle cx="8" cy="9" r="6.5" fill="none" stroke="#7a7a7a" stroke-width="1.6"/><path d="M8 5.5 V12.5 M4.5 9 H11.5" stroke="#7a7a7a" stroke-width="1.8"/><path d="M3 1 L6 3" stroke="#7a7a7a" stroke-width="1.3"/></svg>
<svg style="position:absolute;left:1117px;top:803px" width="5" height="3" viewBox="0 0 5 3"><path d="M0 0 H5 L2.5 3Z" fill="#555"/></svg>
<svg style="position:absolute;left:1130px;top:797px" width="16" height="16" viewBox="0 0 16 16"><rect x="0.6" y="0.6" width="14.8" height="14.8" rx="2" fill="#f4f4f4" stroke="#cfcfcf" stroke-width="1.2"/><circle cx="8" cy="8" r="1.5" fill="#ccc"/><path d="M4 4 L6 6 M12 4 L10 6 M4 12 L6 10 M12 12 L10 10" stroke="#ccc"/></svg>
<svg style="position:absolute;left:1153px;top:797px" width="16" height="16" viewBox="0 0 16 16"><rect x="0.6" y="0.6" width="14.8" height="14.8" rx="2" fill="#f4f4f4" stroke="#8a8a8a" stroke-width="1.2"/><path d="M4 5 H12 M4 8 H10 M4 11 H11" stroke="#777" stroke-width="1.2"/></svg>
<svg style="position:absolute;left:1178px;top:797px" width="16" height="16" viewBox="0 0 16 16"><rect x="0.6" y="0.6" width="14.8" height="14.8" rx="2" fill="#f4f4f4" stroke="#8a8a8a" stroke-width="1.2"/><rect x="1" y="1" width="14" height="4" fill="#777"/><text x="8" y="13.5" text-anchor="middle" font-family="Liberation Sans" font-weight="bold" font-size="7" fill="#666">24</text></svg>
<svg style="position:absolute;left:1203px;top:797px" width="16" height="16" viewBox="0 0 16 16"><rect x="0.6" y="0.6" width="14.8" height="14.8" rx="2" fill="#f4f4f4" stroke="#8a8a8a" stroke-width="1.2"/><rect x="3" y="3" width="6" height="6" fill="#777"/><circle cx="10.5" cy="10.5" r="3.5" fill="none" stroke="#777" stroke-width="1.5"/></svg>
<svg style="position:absolute;left:1228px;top:797px" width="16" height="16" viewBox="0 0 16 16"><rect x="0.6" y="0.6" width="14.8" height="14.8" rx="2" fill="#f4f4f4" stroke="#8a8a8a" stroke-width="1.2"/><path d="M4 12 L9 3 L13 5 L7 13Z" fill="#777"/><circle cx="10" cy="5.5" r="1" fill="#fff"/></svg>
<svg style="position:absolute;left:1253px;top:797px" width="16" height="16" viewBox="0 0 16 16"><rect x="0.6" y="0.6" width="14.8" height="14.8" rx="2" fill="#f4f4f4" stroke="#8a8a8a" stroke-width="1.2"/><path d="M3 1 V15" stroke="#777" stroke-width="1.5"/><path d="M5 4 H13 M5 7 H12 M5 10 H9" stroke="#777"/><path d="M9 9 L14 14" stroke="#777" stroke-width="1.5"/></svg>
<div class="t " style="left:1280px;top:797px;font-size:12.5px;line-height:15px;color:#555555;letter-spacing:-0.875px;">52 %</div>
<div style="position:absolute;left:1325px;top:805px;width:9px;height:1px;background:#999;"></div>
<div style="position:absolute;left:1345px;top:805px;width:85px;height:1px;background:#c8c8c8;"></div>
<div style="position:absolute;left:1364px;top:797px;width:5px;height:16px;background:#f4f4f4;border:1px solid #aaa;box-sizing:border-box;"></div>
<svg style="position:absolute;left:1441px;top:801px" width="9" height="9" viewBox="0 0 9 9"><path d="M4.5 0 V9 M0 4.5 H9" stroke="#999" stroke-width="1"/></svg>
<svg style="position:absolute;left:1459px;top:799px" width="15" height="14" viewBox="0 0 15 14"><rect x="0.5" y="0.5" width="14" height="13" fill="#f4f4f4" stroke="#777"/><path d="M7.5 3 V11 M3.5 7 H11.5" stroke="#888" stroke-width="0.8"/></svg>
<svg style="position:absolute;left:1489px;top:799px" width="14" height="14" viewBox="0 0 14 14"><rect x="0.5" y="0.5" width="13" height="13" fill="#777"/><rect x="8" y="2" width="4" height="11" fill="#f0f0f0"/></svg>
<svg style="position:absolute;left:1507px;top:804px" width="6" height="4" viewBox="0 0 6 4"><path d="M0 0 H6 L3 3.5Z" fill="#555"/></svg>
<svg style="position:absolute;left:1521px;top:799px" width="10" height="12" viewBox="0 0 10 12"><g fill="#aaa"><rect x="8" y="2" width="1.5" height="1.5"/><rect x="8" y="6" width="1.5" height="1.5"/><rect x="8" y="10" width="1.5" height="1.5"/><rect x="4" y="6" width="1.5" height="1.5"/><rect x="4" y="10" width="1.5" height="1.5"/><rect x="0" y="10" width="1.5" height="1.5"/></g></svg>
</body></html>
